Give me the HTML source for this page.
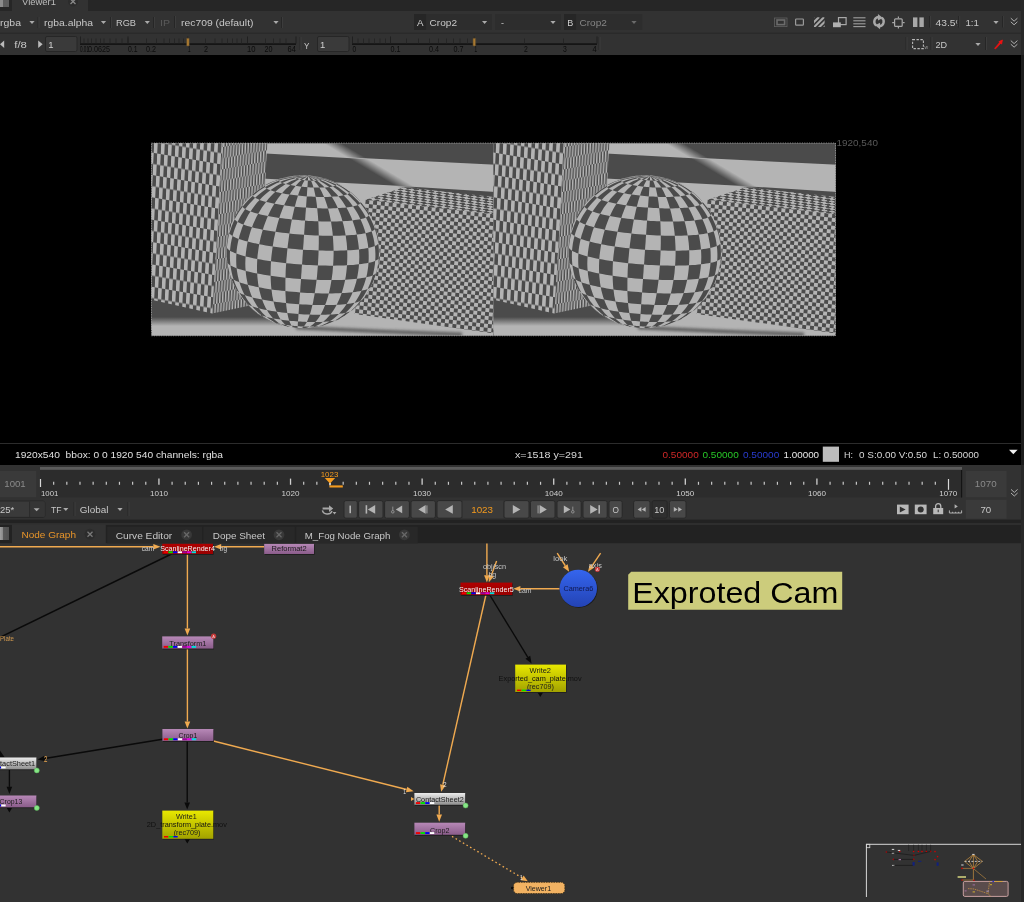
<!DOCTYPE html>
<html><head><meta charset="utf-8">
<style>
html,body{margin:0;padding:0;background:#323232;}
body{width:1024px;height:902px;overflow:hidden;position:relative;}
svg{position:absolute;left:0;top:0;display:block;}
text{font-family:"Liberation Sans",sans-serif;white-space:pre;}
</style></head><body>
<svg width="1024" height="902" viewBox="0 0 1024 902" style="opacity:0.999">
<rect x="0.00" y="0.00" width="1024.00" height="902.00" fill="#323232" />
<rect x="0.00" y="0.00" width="1024.00" height="11.00" fill="#262626" />
<rect x="12.00" y="0.00" width="76.00" height="11.00" fill="#323232" />
<rect x="0.00" y="0.00" width="3.00" height="7.00" fill="#8c8c8c" />
<rect x="3.00" y="0.00" width="6.00" height="7.00" fill="#5e5e5e" />
<text x="22.00" y="5.00" font-size="9.5" fill="#bdbdbd" text-anchor="start" textLength="34.00" lengthAdjust="spacingAndGlyphs" >Viewer1</text>
<circle cx="73" cy="1.5" r="5" fill="#2c2c2c"/>
<line x1="70.50" y1="-1.00" x2="75.50" y2="4.00" stroke="#8a8a8a" stroke-width="1.3" />
<line x1="75.50" y1="-1.00" x2="70.50" y2="4.00" stroke="#8a8a8a" stroke-width="1.3" />
<rect x="0.00" y="32.60" width="1021.00" height="1.20" fill="#2a2a2a" />
<text x="0.00" y="26.00" font-size="9.5" fill="#c8c8c8" text-anchor="start" textLength="21.00" lengthAdjust="spacingAndGlyphs" >rgba</text>
<polygon points="29.40,21.00 34.60,21.00 32.00,23.90" fill="#aaaaaa" />
<line x1="38.00" y1="17.00" x2="38.00" y2="28.00" stroke="#262626" stroke-width="1" />
<line x1="39.00" y1="17.00" x2="39.00" y2="28.00" stroke="#3c3c3c" stroke-width="1" />
<text x="44.00" y="26.00" font-size="9.5" fill="#c8c8c8" text-anchor="start" textLength="49.00" lengthAdjust="spacingAndGlyphs" >rgba.alpha</text>
<polygon points="100.90,21.00 106.10,21.00 103.50,23.90" fill="#aaaaaa" />
<line x1="110.50" y1="17.00" x2="110.50" y2="28.00" stroke="#262626" stroke-width="1" />
<line x1="111.50" y1="17.00" x2="111.50" y2="28.00" stroke="#3c3c3c" stroke-width="1" />
<text x="116.00" y="26.00" font-size="9.5" fill="#c8c8c8" text-anchor="start" textLength="20.00" lengthAdjust="spacingAndGlyphs" >RGB</text>
<polygon points="144.70,21.00 149.90,21.00 147.30,23.90" fill="#aaaaaa" />
<line x1="153.50" y1="17.00" x2="153.50" y2="28.00" stroke="#262626" stroke-width="1" />
<line x1="154.50" y1="17.00" x2="154.50" y2="28.00" stroke="#3c3c3c" stroke-width="1" />
<text x="160.00" y="26.00" font-size="9.5" fill="#5a5a5a" text-anchor="start" textLength="10.00" lengthAdjust="spacingAndGlyphs" >IP</text>
<line x1="174.50" y1="16.00" x2="174.50" y2="28.00" stroke="#262626" stroke-width="1" />
<line x1="175.50" y1="16.00" x2="175.50" y2="28.00" stroke="#3c3c3c" stroke-width="1" />
<text x="181.00" y="26.00" font-size="9.5" fill="#c8c8c8" text-anchor="start" textLength="72.50" lengthAdjust="spacingAndGlyphs" >rec709 (default)</text>
<polygon points="273.40,21.00 278.60,21.00 276.00,23.90" fill="#aaaaaa" />
<line x1="281.50" y1="17.00" x2="281.50" y2="28.00" stroke="#262626" stroke-width="1" />
<line x1="282.50" y1="17.00" x2="282.50" y2="28.00" stroke="#3c3c3c" stroke-width="1" />
<rect x="414.00" y="14.00" width="12.50" height="16.00" fill="#262626" />
<text x="417.00" y="26.00" font-size="9.5" fill="#d0d0d0" text-anchor="start" textLength="6.50" lengthAdjust="spacingAndGlyphs" >A</text>
<rect x="426.50" y="14.00" width="65.50" height="16.00" fill="#2d2d2d" />
<text x="429.60" y="26.00" font-size="9.5" fill="#c8c8c8" text-anchor="start" textLength="27.40" lengthAdjust="spacingAndGlyphs" >Crop2</text>
<polygon points="482.00,21.00 487.20,21.00 484.60,23.90" fill="#aaaaaa" />
<rect x="495.00" y="14.00" width="66.00" height="16.00" fill="#2d2d2d" />
<text x="501.00" y="26.00" font-size="9.5" fill="#c8c8c8" text-anchor="start" textLength="3.00" lengthAdjust="spacingAndGlyphs" >-</text>
<polygon points="550.40,21.00 555.60,21.00 553.00,23.90" fill="#aaaaaa" />
<rect x="564.00" y="14.00" width="12.40" height="16.00" fill="#262626" />
<text x="567.30" y="26.00" font-size="9.5" fill="#d0d0d0" text-anchor="start" textLength="6.00" lengthAdjust="spacingAndGlyphs" >B</text>
<rect x="576.40" y="14.00" width="66.00" height="16.00" fill="#2d2d2d" />
<text x="579.50" y="26.00" font-size="9.5" fill="#858585" text-anchor="start" textLength="27.40" lengthAdjust="spacingAndGlyphs" >Crop2</text>
<polygon points="631.40,21.00 636.60,21.00 634.00,23.90" fill="#6a6a6a" />
<rect x="774.5" y="18" width="12.5" height="8.6" fill="none" stroke="#606060" stroke-width="0.8"/>
<rect x="777" y="20" width="7.6" height="4.6" fill="none" stroke="#6c6c6c" stroke-width="1.6"/>
<rect x="795.6" y="19" width="7.8" height="6.2" rx="0.8" fill="none" stroke="#9a9a9a" stroke-width="1.2"/>
<g clip-path="url(#cs3)"><clipPath id="cs3"><rect x="814" y="17.2" width="10.6" height="9.8"/></clipPath>
<line x1="797.6" y1="28" x2="808.6" y2="17" stroke="#a8a8a8" stroke-width="2.1"/>
<line x1="802.8" y1="28" x2="813.8" y2="17" stroke="#a8a8a8" stroke-width="2.1"/>
<line x1="808.0" y1="28" x2="819.0" y2="17" stroke="#a8a8a8" stroke-width="2.1"/>
<line x1="813.2" y1="28" x2="824.2" y2="17" stroke="#a8a8a8" stroke-width="2.1"/>
<line x1="818.4" y1="28" x2="829.4" y2="17" stroke="#a8a8a8" stroke-width="2.1"/>
<line x1="823.6" y1="28" x2="834.6" y2="17" stroke="#a8a8a8" stroke-width="2.1"/>
<line x1="828.8" y1="28" x2="839.8" y2="17" stroke="#a8a8a8" stroke-width="2.1"/>
</g>
<rect x="838.5" y="17.6" width="7.6" height="7" fill="none" stroke="#a8a8a8" stroke-width="1.2"/>
<rect x="833.00" y="22.40" width="7.80" height="4.80" fill="#b0b0b0" />
<line x1="853.30" y1="17.80" x2="865.50" y2="17.80" stroke="#a0a0a0" stroke-width="1.1" />
<line x1="853.30" y1="20.80" x2="865.50" y2="20.80" stroke="#a0a0a0" stroke-width="1.1" />
<line x1="853.30" y1="23.80" x2="865.50" y2="23.80" stroke="#a0a0a0" stroke-width="1.1" />
<line x1="853.30" y1="26.60" x2="865.50" y2="26.60" stroke="#a0a0a0" stroke-width="1.1" />
<path d="M876.30,25.45 A4.7,4.7 0 0 1 878.35,16.95" fill="none" stroke="#a8a8a8" stroke-width="2.4"/>
<path d="M881.70,17.75 A4.7,4.7 0 0 1 879.65,26.25" fill="none" stroke="#a8a8a8" stroke-width="2.4"/>
<polygon points="877.95,13.95 882.95,17.95 877.95,20.55" fill="#a8a8a8" />
<polygon points="880.05,29.25 875.05,25.25 880.05,22.65" fill="#a8a8a8" />
<rect x="894.6" y="18.8" width="7.6" height="7.6" rx="1" fill="none" stroke="#a8a8a8" stroke-width="1.2"/>
<line x1="892.20" y1="22.60" x2="894.00" y2="22.60" stroke="#a8a8a8" stroke-width="1.2" />
<line x1="902.80" y1="22.60" x2="904.60" y2="22.60" stroke="#a8a8a8" stroke-width="1.2" />
<line x1="898.40" y1="16.40" x2="898.40" y2="18.20" stroke="#a8a8a8" stroke-width="1.2" />
<line x1="898.40" y1="27.00" x2="898.40" y2="28.60" stroke="#a8a8a8" stroke-width="1.2" />
<rect x="913.00" y="17.40" width="4.40" height="9.60" fill="#a8a8a8" />
<rect x="919.40" y="17.40" width="4.40" height="9.60" fill="#a8a8a8" />
<line x1="929.50" y1="16.00" x2="929.50" y2="27.50" stroke="#262626" stroke-width="1" />
<line x1="930.50" y1="16.00" x2="930.50" y2="27.50" stroke="#3c3c3c" stroke-width="1" />
<clipPath id="cz"><rect x="930" y="12" width="27.3" height="20"/></clipPath>
<text x="935.60" y="26.00" font-size="9.5" fill="#c8c8c8" text-anchor="start" textLength="29.00" lengthAdjust="spacingAndGlyphs" clip-path="url(#cz)">43.5%</text>
<line x1="958.70" y1="16.00" x2="958.70" y2="27.50" stroke="#262626" stroke-width="1" />
<line x1="959.70" y1="16.00" x2="959.70" y2="27.50" stroke="#3c3c3c" stroke-width="1" />
<text x="965.40" y="26.00" font-size="9.5" fill="#c8c8c8" text-anchor="start" textLength="13.60" lengthAdjust="spacingAndGlyphs" >1:1</text>
<polygon points="993.40,21.00 998.60,21.00 996.00,23.90" fill="#aaaaaa" />
<line x1="1002.60" y1="16.00" x2="1002.60" y2="27.50" stroke="#262626" stroke-width="1" />
<line x1="1003.60" y1="16.00" x2="1003.60" y2="27.50" stroke="#3c3c3c" stroke-width="1" />
<path d="M1010.8,18.2 l3.3,3 l3.3,-3 M1010.8,21.8 l3.3,3 l3.3,-3" fill="none" stroke="#b0b0b0" stroke-width="1"/>
<polygon points="0.00,44.30 4.20,40.60 4.20,48.00" fill="#bbbbbb" />
<text x="14.30" y="48.00" font-size="9.5" fill="#c8c8c8" text-anchor="start" textLength="12.60" lengthAdjust="spacingAndGlyphs" >f/8</text>
<polygon points="38.20,40.60 42.60,44.30 38.20,48.00" fill="#bbbbbb" />
<rect x="45.5" y="36.5" width="31.5" height="15" rx="1.5" fill="#3a3a3a" stroke="#262626" stroke-width="1"/>
<text x="48.30" y="48.00" font-size="9.5" fill="#d0d0d0" text-anchor="start" >1</text>
<line x1="80.00" y1="44.20" x2="296.00" y2="44.20" stroke="#151515" stroke-width="1.7" />
<line x1="80.50" y1="36.50" x2="80.50" y2="43.60" stroke="#1e1e1e" stroke-width="0.9" />
<line x1="128.00" y1="36.50" x2="128.00" y2="43.60" stroke="#1e1e1e" stroke-width="0.9" />
<line x1="187.80" y1="36.50" x2="187.80" y2="43.60" stroke="#1e1e1e" stroke-width="0.9" />
<line x1="247.50" y1="36.50" x2="247.50" y2="43.60" stroke="#1e1e1e" stroke-width="0.9" />
<line x1="296.00" y1="36.50" x2="296.00" y2="43.60" stroke="#1e1e1e" stroke-width="0.9" />
<line x1="84.00" y1="38.60" x2="84.00" y2="43.60" stroke="#222222" stroke-width="0.8" />
<line x1="88.00" y1="38.60" x2="88.00" y2="43.60" stroke="#222222" stroke-width="0.8" />
<line x1="91.50" y1="38.60" x2="91.50" y2="43.60" stroke="#222222" stroke-width="0.8" />
<line x1="96.00" y1="38.60" x2="96.00" y2="43.60" stroke="#222222" stroke-width="0.8" />
<line x1="100.50" y1="38.60" x2="100.50" y2="43.60" stroke="#222222" stroke-width="0.8" />
<line x1="104.00" y1="38.60" x2="104.00" y2="43.60" stroke="#222222" stroke-width="0.8" />
<line x1="110.00" y1="38.60" x2="110.00" y2="43.60" stroke="#222222" stroke-width="0.8" />
<line x1="116.00" y1="38.60" x2="116.00" y2="43.60" stroke="#222222" stroke-width="0.8" />
<line x1="122.00" y1="38.60" x2="122.00" y2="43.60" stroke="#222222" stroke-width="0.8" />
<line x1="128.00" y1="38.60" x2="128.00" y2="43.60" stroke="#222222" stroke-width="0.8" />
<line x1="146.50" y1="38.60" x2="146.50" y2="43.60" stroke="#222222" stroke-width="0.8" />
<line x1="156.50" y1="38.60" x2="156.50" y2="43.60" stroke="#222222" stroke-width="0.8" />
<line x1="164.00" y1="38.60" x2="164.00" y2="43.60" stroke="#222222" stroke-width="0.8" />
<line x1="169.50" y1="38.60" x2="169.50" y2="43.60" stroke="#222222" stroke-width="0.8" />
<line x1="174.50" y1="38.60" x2="174.50" y2="43.60" stroke="#222222" stroke-width="0.8" />
<line x1="179.00" y1="38.60" x2="179.00" y2="43.60" stroke="#222222" stroke-width="0.8" />
<line x1="183.50" y1="38.60" x2="183.50" y2="43.60" stroke="#222222" stroke-width="0.8" />
<line x1="205.50" y1="38.60" x2="205.50" y2="43.60" stroke="#222222" stroke-width="0.8" />
<line x1="215.00" y1="38.60" x2="215.00" y2="43.60" stroke="#222222" stroke-width="0.8" />
<line x1="222.00" y1="38.60" x2="222.00" y2="43.60" stroke="#222222" stroke-width="0.8" />
<line x1="227.50" y1="38.60" x2="227.50" y2="43.60" stroke="#222222" stroke-width="0.8" />
<line x1="232.50" y1="38.60" x2="232.50" y2="43.60" stroke="#222222" stroke-width="0.8" />
<line x1="237.00" y1="38.60" x2="237.00" y2="43.60" stroke="#222222" stroke-width="0.8" />
<line x1="241.50" y1="38.60" x2="241.50" y2="43.60" stroke="#222222" stroke-width="0.8" />
<line x1="265.50" y1="38.60" x2="265.50" y2="43.60" stroke="#222222" stroke-width="0.8" />
<line x1="273.50" y1="38.60" x2="273.50" y2="43.60" stroke="#222222" stroke-width="0.8" />
<line x1="280.00" y1="38.60" x2="280.00" y2="43.60" stroke="#222222" stroke-width="0.8" />
<line x1="286.00" y1="38.60" x2="286.00" y2="43.60" stroke="#222222" stroke-width="0.8" />
<text x="80.00" y="52.20" font-size="8.4" fill="#0c0c0c" text-anchor="start" textLength="9.00" lengthAdjust="spacingAndGlyphs" >0.01</text>
<text x="88.00" y="52.20" font-size="8.4" fill="#0c0c0c" text-anchor="start" textLength="22.00" lengthAdjust="spacingAndGlyphs" >0.0625</text>
<text x="128.00" y="52.20" font-size="8.4" fill="#0c0c0c" text-anchor="start" textLength="9.50" lengthAdjust="spacingAndGlyphs" >0.1</text>
<text x="146.00" y="52.20" font-size="8.4" fill="#0c0c0c" text-anchor="start" textLength="10.00" lengthAdjust="spacingAndGlyphs" >0.2</text>
<text x="188.00" y="52.20" font-size="8.4" fill="#0c0c0c" text-anchor="start" textLength="2.60" lengthAdjust="spacingAndGlyphs" >1</text>
<text x="204.00" y="52.20" font-size="8.4" fill="#0c0c0c" text-anchor="start" textLength="4.00" lengthAdjust="spacingAndGlyphs" >2</text>
<text x="247.00" y="52.20" font-size="8.4" fill="#0c0c0c" text-anchor="start" textLength="8.50" lengthAdjust="spacingAndGlyphs" >10</text>
<text x="264.50" y="52.20" font-size="8.4" fill="#0c0c0c" text-anchor="start" textLength="8.00" lengthAdjust="spacingAndGlyphs" >20</text>
<text x="287.60" y="52.20" font-size="8.4" fill="#0c0c0c" text-anchor="start" textLength="8.40" lengthAdjust="spacingAndGlyphs" >64</text>
<rect x="186.70" y="38.30" width="2.40" height="7.60" fill="#a87830" />
<rect x="186.4" y="38" width="3" height="8.2" rx="1" fill="none" stroke="#5a4a30" stroke-width="0.5"/>
<line x1="300.00" y1="37.00" x2="300.00" y2="50.00" stroke="#262626" stroke-width="1" />
<line x1="301.00" y1="37.00" x2="301.00" y2="50.00" stroke="#3c3c3c" stroke-width="1" />
<text x="304.00" y="49.00" font-size="9.5" fill="#c8c8c8" text-anchor="start" textLength="5.40" lengthAdjust="spacingAndGlyphs" >Y</text>
<rect x="317.5" y="36.5" width="31.5" height="15" rx="1.5" fill="#3a3a3a" stroke="#262626" stroke-width="1"/>
<text x="320.00" y="48.00" font-size="9.5" fill="#d0d0d0" text-anchor="start" >1</text>
<line x1="352.00" y1="44.20" x2="597.00" y2="44.20" stroke="#151515" stroke-width="1.7" />
<line x1="352.50" y1="36.50" x2="352.50" y2="43.60" stroke="#1e1e1e" stroke-width="0.9" />
<line x1="390.50" y1="36.50" x2="390.50" y2="43.60" stroke="#1e1e1e" stroke-width="0.9" />
<line x1="474.20" y1="36.50" x2="474.20" y2="43.60" stroke="#1e1e1e" stroke-width="0.9" />
<line x1="597.00" y1="36.50" x2="597.00" y2="43.60" stroke="#1e1e1e" stroke-width="0.9" />
<line x1="358.00" y1="38.60" x2="358.00" y2="43.60" stroke="#222222" stroke-width="0.8" />
<line x1="363.50" y1="38.60" x2="363.50" y2="43.60" stroke="#222222" stroke-width="0.8" />
<line x1="369.00" y1="38.60" x2="369.00" y2="43.60" stroke="#222222" stroke-width="0.8" />
<line x1="374.50" y1="38.60" x2="374.50" y2="43.60" stroke="#222222" stroke-width="0.8" />
<line x1="380.00" y1="38.60" x2="380.00" y2="43.60" stroke="#222222" stroke-width="0.8" />
<line x1="385.50" y1="38.60" x2="385.50" y2="43.60" stroke="#222222" stroke-width="0.8" />
<line x1="406.50" y1="38.60" x2="406.50" y2="43.60" stroke="#222222" stroke-width="0.8" />
<line x1="418.50" y1="38.60" x2="418.50" y2="43.60" stroke="#222222" stroke-width="0.8" />
<line x1="429.50" y1="38.60" x2="429.50" y2="43.60" stroke="#222222" stroke-width="0.8" />
<line x1="438.50" y1="38.60" x2="438.50" y2="43.60" stroke="#222222" stroke-width="0.8" />
<line x1="446.50" y1="38.60" x2="446.50" y2="43.60" stroke="#222222" stroke-width="0.8" />
<line x1="453.50" y1="38.60" x2="453.50" y2="43.60" stroke="#222222" stroke-width="0.8" />
<line x1="460.00" y1="38.60" x2="460.00" y2="43.60" stroke="#222222" stroke-width="0.8" />
<line x1="467.50" y1="38.60" x2="467.50" y2="43.60" stroke="#222222" stroke-width="0.8" />
<line x1="524.50" y1="38.60" x2="524.50" y2="43.60" stroke="#222222" stroke-width="0.8" />
<line x1="563.50" y1="38.60" x2="563.50" y2="43.60" stroke="#222222" stroke-width="0.8" />
<text x="352.50" y="52.20" font-size="8.4" fill="#0c0c0c" text-anchor="start" textLength="3.60" lengthAdjust="spacingAndGlyphs" >0</text>
<text x="390.50" y="52.20" font-size="8.4" fill="#0c0c0c" text-anchor="start" textLength="10.00" lengthAdjust="spacingAndGlyphs" >0.1</text>
<text x="429.00" y="52.20" font-size="8.4" fill="#0c0c0c" text-anchor="start" textLength="10.00" lengthAdjust="spacingAndGlyphs" >0.4</text>
<text x="453.50" y="52.20" font-size="8.4" fill="#0c0c0c" text-anchor="start" textLength="10.00" lengthAdjust="spacingAndGlyphs" >0.7</text>
<text x="474.60" y="52.20" font-size="8.4" fill="#0c0c0c" text-anchor="start" textLength="2.60" lengthAdjust="spacingAndGlyphs" >1</text>
<text x="524.00" y="52.20" font-size="8.4" fill="#0c0c0c" text-anchor="start" textLength="3.80" lengthAdjust="spacingAndGlyphs" >2</text>
<text x="563.00" y="52.20" font-size="8.4" fill="#0c0c0c" text-anchor="start" textLength="3.80" lengthAdjust="spacingAndGlyphs" >3</text>
<text x="592.40" y="52.20" font-size="8.4" fill="#0c0c0c" text-anchor="start" textLength="4.20" lengthAdjust="spacingAndGlyphs" >4</text>
<rect x="473.10" y="38.30" width="2.40" height="7.60" fill="#a87830" />
<rect x="472.8" y="38" width="3" height="8.2" rx="1" fill="none" stroke="#5a4a30" stroke-width="0.5"/>
<line x1="599.00" y1="37.00" x2="599.00" y2="50.00" stroke="#262626" stroke-width="1" />
<line x1="600.00" y1="37.00" x2="600.00" y2="50.00" stroke="#3c3c3c" stroke-width="1" />
<line x1="906.00" y1="37.00" x2="906.00" y2="50.00" stroke="#262626" stroke-width="1" />
<line x1="907.00" y1="37.00" x2="907.00" y2="50.00" stroke="#3c3c3c" stroke-width="1" />
<rect x="912.6" y="39.6" width="10.8" height="9" fill="none" stroke="#b8b8b8" stroke-width="1.1" stroke-dasharray="2.4,1.5"/>
<text x="924.60" y="49.40" font-size="4.5" fill="#9a9a9a" text-anchor="start" textLength="3.60" lengthAdjust="spacingAndGlyphs" >w</text>
<line x1="931.00" y1="37.00" x2="931.00" y2="50.00" stroke="#262626" stroke-width="1" />
<line x1="932.00" y1="37.00" x2="932.00" y2="50.00" stroke="#3c3c3c" stroke-width="1" />
<text x="935.40" y="48.00" font-size="9.5" fill="#c8c8c8" text-anchor="start" textLength="11.60" lengthAdjust="spacingAndGlyphs" >2D</text>
<polygon points="975.40,43.00 980.60,43.00 978.00,45.90" fill="#aaaaaa" />
<line x1="985.50" y1="37.00" x2="985.50" y2="50.00" stroke="#262626" stroke-width="1" />
<line x1="986.50" y1="37.00" x2="986.50" y2="50.00" stroke="#3c3c3c" stroke-width="1" />
<path d="M994.6,48.4 L999.6,42.6 L998.8,41.8 L1002.4,40 L1001.6,44 L1000.6,43.4 L995.6,48.8 Z" fill="#ee1111" stroke="#ee1111" stroke-width="0.8"/>
<path d="M1010.8,40.6 l3.3,3 l3.3,-3 M1010.8,44.2 l3.3,3 l3.3,-3" fill="none" stroke="#b0b0b0" stroke-width="1"/>
<rect x="0.00" y="55.00" width="1021.00" height="410.00" fill="#000000" />
<rect x="0.00" y="443.00" width="1021.00" height="1.00" fill="#2c2c2c" />
<rect x="1021.00" y="0.00" width="3.00" height="902.00" fill="#282828" />
<rect x="1021.00" y="55.00" width="3.00" height="410.00" fill="#1c1c1c" />
<text x="15.00" y="458.00" font-size="9.5" fill="#e0e0e0" text-anchor="start" textLength="208.00" lengthAdjust="spacingAndGlyphs" >1920x540  bbox: 0 0 1920 540 channels: rgba</text>
<text x="515.00" y="458.00" font-size="9.5" fill="#d8d8d8" text-anchor="start" textLength="68.00" lengthAdjust="spacingAndGlyphs" >x=1518 y=291</text>
<text x="662.50" y="458.00" font-size="9.5" fill="#d02828" text-anchor="start" textLength="36.20" lengthAdjust="spacingAndGlyphs" >0.50000</text>
<text x="702.50" y="458.00" font-size="9.5" fill="#28c828" text-anchor="start" textLength="36.20" lengthAdjust="spacingAndGlyphs" >0.50000</text>
<text x="743.00" y="458.00" font-size="9.5" fill="#2a3cd0" text-anchor="start" textLength="36.20" lengthAdjust="spacingAndGlyphs" >0.50000</text>
<text x="783.50" y="458.00" font-size="9.5" fill="#e8e8e8" text-anchor="start" textLength="35.60" lengthAdjust="spacingAndGlyphs" >1.00000</text>
<rect x="822.80" y="446.60" width="16.20" height="15.20" fill="#bcbcbc" />
<text x="844.00" y="458.00" font-size="9.5" fill="#d8d8d8" text-anchor="start" textLength="9.00" lengthAdjust="spacingAndGlyphs" >H:</text>
<text x="859.00" y="458.00" font-size="9.5" fill="#d8d8d8" text-anchor="start" textLength="68.00" lengthAdjust="spacingAndGlyphs" >0 S:0.00 V:0.50</text>
<text x="933.00" y="458.00" font-size="9.5" fill="#d8d8d8" text-anchor="start" textLength="46.00" lengthAdjust="spacingAndGlyphs" >L: 0.50000</text>
<polygon points="1009.00,449.80 1017.60,449.80 1013.30,454.20" fill="#f0f0f0" />
<rect x="0.00" y="465.00" width="1021.00" height="58.00" fill="#323232" />
<rect x="40.00" y="467.00" width="922.00" height="30.50" fill="#2c2c2c" />
<rect x="40.00" y="467.00" width="922.00" height="2.80" fill="#5c5c5c" />
<rect x="961.00" y="470.00" width="1.20" height="27.50" fill="#141414" />
<rect x="0.00" y="471.00" width="36.20" height="26.20" fill="#3a3a3a" />
<text x="4.30" y="487.40" font-size="9.5" fill="#8a8a8a" text-anchor="start" textLength="21.40" lengthAdjust="spacingAndGlyphs" >1001</text>
<rect x="965.80" y="471.00" width="40.80" height="26.20" fill="#3a3a3a" />
<text x="974.80" y="487.40" font-size="9.5" fill="#8a8a8a" text-anchor="start" textLength="21.80" lengthAdjust="spacingAndGlyphs" >1070</text>
<path d="M1011,489.4 l3.3,3 l3.3,-3 M1011,493.0 l3.3,3 l3.3,-3" fill="none" stroke="#b0b0b0" stroke-width="1"/>
<line x1="40.50" y1="479.00" x2="40.50" y2="487.00" stroke="#d8d8d8" stroke-width="1.2" />
<line x1="53.66" y1="481.80" x2="53.66" y2="484.80" stroke="#c8c8c8" stroke-width="1.2" />
<line x1="66.82" y1="481.80" x2="66.82" y2="484.80" stroke="#c8c8c8" stroke-width="1.2" />
<line x1="79.98" y1="481.80" x2="79.98" y2="484.80" stroke="#c8c8c8" stroke-width="1.2" />
<line x1="93.14" y1="481.80" x2="93.14" y2="484.80" stroke="#c8c8c8" stroke-width="1.2" />
<line x1="106.30" y1="481.80" x2="106.30" y2="484.80" stroke="#c8c8c8" stroke-width="1.2" />
<line x1="119.46" y1="481.80" x2="119.46" y2="484.80" stroke="#c8c8c8" stroke-width="1.2" />
<line x1="132.62" y1="481.80" x2="132.62" y2="484.80" stroke="#c8c8c8" stroke-width="1.2" />
<line x1="145.78" y1="481.80" x2="145.78" y2="484.80" stroke="#c8c8c8" stroke-width="1.2" />
<line x1="158.93" y1="478.60" x2="158.93" y2="484.80" stroke="#d0d0d0" stroke-width="1.3" />
<line x1="172.09" y1="481.80" x2="172.09" y2="484.80" stroke="#c8c8c8" stroke-width="1.2" />
<line x1="185.25" y1="481.80" x2="185.25" y2="484.80" stroke="#c8c8c8" stroke-width="1.2" />
<line x1="198.41" y1="481.80" x2="198.41" y2="484.80" stroke="#c8c8c8" stroke-width="1.2" />
<line x1="211.57" y1="481.80" x2="211.57" y2="484.80" stroke="#c8c8c8" stroke-width="1.2" />
<line x1="224.73" y1="481.80" x2="224.73" y2="484.80" stroke="#c8c8c8" stroke-width="1.2" />
<line x1="237.89" y1="481.80" x2="237.89" y2="484.80" stroke="#c8c8c8" stroke-width="1.2" />
<line x1="251.05" y1="481.80" x2="251.05" y2="484.80" stroke="#c8c8c8" stroke-width="1.2" />
<line x1="264.21" y1="481.80" x2="264.21" y2="484.80" stroke="#c8c8c8" stroke-width="1.2" />
<line x1="277.37" y1="481.80" x2="277.37" y2="484.80" stroke="#c8c8c8" stroke-width="1.2" />
<line x1="290.53" y1="478.60" x2="290.53" y2="484.80" stroke="#d0d0d0" stroke-width="1.3" />
<line x1="303.69" y1="481.80" x2="303.69" y2="484.80" stroke="#c8c8c8" stroke-width="1.2" />
<line x1="316.85" y1="481.80" x2="316.85" y2="484.80" stroke="#c8c8c8" stroke-width="1.2" />
<line x1="330.01" y1="481.80" x2="330.01" y2="484.80" stroke="#c8c8c8" stroke-width="1.2" />
<line x1="343.17" y1="481.80" x2="343.17" y2="484.80" stroke="#c8c8c8" stroke-width="1.2" />
<line x1="356.33" y1="481.80" x2="356.33" y2="484.80" stroke="#c8c8c8" stroke-width="1.2" />
<line x1="369.49" y1="481.80" x2="369.49" y2="484.80" stroke="#c8c8c8" stroke-width="1.2" />
<line x1="382.64" y1="481.80" x2="382.64" y2="484.80" stroke="#c8c8c8" stroke-width="1.2" />
<line x1="395.80" y1="481.80" x2="395.80" y2="484.80" stroke="#c8c8c8" stroke-width="1.2" />
<line x1="408.96" y1="481.80" x2="408.96" y2="484.80" stroke="#c8c8c8" stroke-width="1.2" />
<line x1="422.12" y1="478.60" x2="422.12" y2="484.80" stroke="#d0d0d0" stroke-width="1.3" />
<line x1="435.28" y1="481.80" x2="435.28" y2="484.80" stroke="#c8c8c8" stroke-width="1.2" />
<line x1="448.44" y1="481.80" x2="448.44" y2="484.80" stroke="#c8c8c8" stroke-width="1.2" />
<line x1="461.60" y1="481.80" x2="461.60" y2="484.80" stroke="#c8c8c8" stroke-width="1.2" />
<line x1="474.76" y1="481.80" x2="474.76" y2="484.80" stroke="#c8c8c8" stroke-width="1.2" />
<line x1="487.92" y1="481.80" x2="487.92" y2="484.80" stroke="#c8c8c8" stroke-width="1.2" />
<line x1="501.08" y1="481.80" x2="501.08" y2="484.80" stroke="#c8c8c8" stroke-width="1.2" />
<line x1="514.24" y1="481.80" x2="514.24" y2="484.80" stroke="#c8c8c8" stroke-width="1.2" />
<line x1="527.40" y1="481.80" x2="527.40" y2="484.80" stroke="#c8c8c8" stroke-width="1.2" />
<line x1="540.56" y1="481.80" x2="540.56" y2="484.80" stroke="#c8c8c8" stroke-width="1.2" />
<line x1="553.72" y1="478.60" x2="553.72" y2="484.80" stroke="#d0d0d0" stroke-width="1.3" />
<line x1="566.88" y1="481.80" x2="566.88" y2="484.80" stroke="#c8c8c8" stroke-width="1.2" />
<line x1="580.04" y1="481.80" x2="580.04" y2="484.80" stroke="#c8c8c8" stroke-width="1.2" />
<line x1="593.20" y1="481.80" x2="593.20" y2="484.80" stroke="#c8c8c8" stroke-width="1.2" />
<line x1="606.36" y1="481.80" x2="606.36" y2="484.80" stroke="#c8c8c8" stroke-width="1.2" />
<line x1="619.51" y1="481.80" x2="619.51" y2="484.80" stroke="#c8c8c8" stroke-width="1.2" />
<line x1="632.67" y1="481.80" x2="632.67" y2="484.80" stroke="#c8c8c8" stroke-width="1.2" />
<line x1="645.83" y1="481.80" x2="645.83" y2="484.80" stroke="#c8c8c8" stroke-width="1.2" />
<line x1="658.99" y1="481.80" x2="658.99" y2="484.80" stroke="#c8c8c8" stroke-width="1.2" />
<line x1="672.15" y1="481.80" x2="672.15" y2="484.80" stroke="#c8c8c8" stroke-width="1.2" />
<line x1="685.31" y1="478.60" x2="685.31" y2="484.80" stroke="#d0d0d0" stroke-width="1.3" />
<line x1="698.47" y1="481.80" x2="698.47" y2="484.80" stroke="#c8c8c8" stroke-width="1.2" />
<line x1="711.63" y1="481.80" x2="711.63" y2="484.80" stroke="#c8c8c8" stroke-width="1.2" />
<line x1="724.79" y1="481.80" x2="724.79" y2="484.80" stroke="#c8c8c8" stroke-width="1.2" />
<line x1="737.95" y1="481.80" x2="737.95" y2="484.80" stroke="#c8c8c8" stroke-width="1.2" />
<line x1="751.11" y1="481.80" x2="751.11" y2="484.80" stroke="#c8c8c8" stroke-width="1.2" />
<line x1="764.27" y1="481.80" x2="764.27" y2="484.80" stroke="#c8c8c8" stroke-width="1.2" />
<line x1="777.43" y1="481.80" x2="777.43" y2="484.80" stroke="#c8c8c8" stroke-width="1.2" />
<line x1="790.59" y1="481.80" x2="790.59" y2="484.80" stroke="#c8c8c8" stroke-width="1.2" />
<line x1="803.75" y1="481.80" x2="803.75" y2="484.80" stroke="#c8c8c8" stroke-width="1.2" />
<line x1="816.91" y1="478.60" x2="816.91" y2="484.80" stroke="#d0d0d0" stroke-width="1.3" />
<line x1="830.07" y1="481.80" x2="830.07" y2="484.80" stroke="#c8c8c8" stroke-width="1.2" />
<line x1="843.22" y1="481.80" x2="843.22" y2="484.80" stroke="#c8c8c8" stroke-width="1.2" />
<line x1="856.38" y1="481.80" x2="856.38" y2="484.80" stroke="#c8c8c8" stroke-width="1.2" />
<line x1="869.54" y1="481.80" x2="869.54" y2="484.80" stroke="#c8c8c8" stroke-width="1.2" />
<line x1="882.70" y1="481.80" x2="882.70" y2="484.80" stroke="#c8c8c8" stroke-width="1.2" />
<line x1="895.86" y1="481.80" x2="895.86" y2="484.80" stroke="#c8c8c8" stroke-width="1.2" />
<line x1="909.02" y1="481.80" x2="909.02" y2="484.80" stroke="#c8c8c8" stroke-width="1.2" />
<line x1="922.18" y1="481.80" x2="922.18" y2="484.80" stroke="#c8c8c8" stroke-width="1.2" />
<line x1="935.34" y1="481.80" x2="935.34" y2="484.80" stroke="#c8c8c8" stroke-width="1.2" />
<line x1="948.50" y1="479.00" x2="948.50" y2="489.80" stroke="#d8d8d8" stroke-width="1.2" />
<text x="41.00" y="496.10" font-size="8" fill="#d0d0d0" text-anchor="start" textLength="17.40" lengthAdjust="spacingAndGlyphs" >1001</text>
<text x="158.93" y="496.10" font-size="8" fill="#d0d0d0" text-anchor="middle" textLength="18.00" lengthAdjust="spacingAndGlyphs" >1010</text>
<text x="290.53" y="496.10" font-size="8" fill="#d0d0d0" text-anchor="middle" textLength="18.00" lengthAdjust="spacingAndGlyphs" >1020</text>
<text x="422.12" y="496.10" font-size="8" fill="#d0d0d0" text-anchor="middle" textLength="18.00" lengthAdjust="spacingAndGlyphs" >1030</text>
<text x="553.72" y="496.10" font-size="8" fill="#d0d0d0" text-anchor="middle" textLength="18.00" lengthAdjust="spacingAndGlyphs" >1040</text>
<text x="685.31" y="496.10" font-size="8" fill="#d0d0d0" text-anchor="middle" textLength="18.00" lengthAdjust="spacingAndGlyphs" >1050</text>
<text x="816.91" y="496.10" font-size="8" fill="#d0d0d0" text-anchor="middle" textLength="18.00" lengthAdjust="spacingAndGlyphs" >1060</text>
<text x="957.20" y="496.10" font-size="8" fill="#d0d0d0" text-anchor="end" textLength="18.00" lengthAdjust="spacingAndGlyphs" >1070</text>
<text x="329.51" y="476.50" font-size="8" fill="#f39a1e" text-anchor="middle" textLength="17.60" lengthAdjust="spacingAndGlyphs" >1023</text>
<polygon points="324.81,478.00 335.21,478.00 330.01,483.40" fill="#f39a1e" />
<line x1="330.01" y1="483.00" x2="330.01" y2="485.40" stroke="#f0f0f0" stroke-width="1.2" />
<rect x="329.41" y="485.40" width="13.40" height="2.10" fill="#f39a1e" />
<rect x="-2" y="501" width="47" height="16.4" rx="2" fill="#3a3a3a" stroke="#272727" stroke-width="1"/>
<rect x="29.60" y="501.50" width="15.00" height="15.40" fill="#353535" />
<line x1="29.60" y1="501.50" x2="29.60" y2="517.00" stroke="#2a2a2a" stroke-width="1" />
<text x="0.00" y="513.00" font-size="9.5" fill="#c8c8c8" text-anchor="start" textLength="14.20" lengthAdjust="spacingAndGlyphs" >25*</text>
<polygon points="33.60,508.20 39.60,508.20 36.60,511.20" fill="#aaaaaa" />
<text x="51.00" y="513.00" font-size="9.5" fill="#c8c8c8" text-anchor="start" textLength="10.60" lengthAdjust="spacingAndGlyphs" >TF</text>
<polygon points="63.20,508.10 68.40,508.10 65.80,511.00" fill="#aaaaaa" />
<line x1="74.00" y1="502.00" x2="74.00" y2="516.00" stroke="#262626" stroke-width="1" />
<line x1="75.00" y1="502.00" x2="75.00" y2="516.00" stroke="#3c3c3c" stroke-width="1" />
<text x="79.80" y="513.00" font-size="9.5" fill="#c8c8c8" text-anchor="start" textLength="28.60" lengthAdjust="spacingAndGlyphs" >Global</text>
<polygon points="117.40,508.10 122.60,508.10 120.00,511.00" fill="#aaaaaa" />
<line x1="128.00" y1="502.00" x2="128.00" y2="516.00" stroke="#262626" stroke-width="1" />
<line x1="129.00" y1="502.00" x2="129.00" y2="516.00" stroke="#3c3c3c" stroke-width="1" />
<path d="M322.6,507.6 h6.4 v-2.4 l4.2,3.4 l-4.2,3.4 v-2.4 h-6.4 z" fill="#a8a8a8"/>
<path d="M322.4,510.4 a5,4.6 0 0 0 9.6,0.6" fill="none" stroke="#a8a8a8" stroke-width="1.5"/>
<polygon points="332.60,512.00 336.40,512.00 334.50,514.40" fill="#a8a8a8" />
<rect x="344" y="500.6" width="13.300000000000011" height="17.6" rx="2" fill="#484848" stroke="#282828" stroke-width="1"/>
<rect x="349.40" y="505.60" width="1.60" height="7.60" fill="#b4b4b4" />
<rect x="358.6" y="500.6" width="24.399999999999977" height="17.6" rx="2" fill="#484848" stroke="#282828" stroke-width="1"/>
<rect x="365.60" y="505.20" width="1.60" height="8.40" fill="#b4b4b4" />
<polygon points="367.80,509.40 375.20,505.00 375.20,513.80" fill="#b4b4b4" />
<rect x="384.6" y="500.6" width="24.799999999999955" height="17.6" rx="2" fill="#484848" stroke="#282828" stroke-width="1"/>
<polygon points="395.80,509.40 402.20,505.60 402.20,513.20" fill="#b4b4b4" />
<circle cx="392.8" cy="511.8" r="1.3" fill="none" stroke="#a0a0a0" stroke-width="0.8"/>
<line x1="392.80" y1="506.60" x2="392.80" y2="510.40" stroke="#a0a0a0" stroke-width="0.8" />
<rect x="411" y="500.6" width="24.399999999999977" height="17.6" rx="2" fill="#484848" stroke="#282828" stroke-width="1"/>
<polygon points="418.40,509.40 425.60,505.00 425.60,513.80" fill="#b4b4b4" />
<rect x="426.20" y="505.40" width="1.40" height="8.00" fill="#8a8a8a" />
<rect x="437" y="500.6" width="25" height="17.6" rx="2" fill="#484848" stroke="#282828" stroke-width="1"/>
<polygon points="445.20,509.40 452.80,505.00 452.80,513.80" fill="#b4b4b4" />
<rect x="462.60" y="500.60" width="40.80" height="17.60" fill="#3a3a3a" />
<text x="471.20" y="513.00" font-size="9.5" fill="#f39a1e" text-anchor="start" textLength="21.80" lengthAdjust="spacingAndGlyphs" >1023</text>
<rect x="504" y="500.6" width="25" height="17.6" rx="2" fill="#484848" stroke="#282828" stroke-width="1"/>
<polygon points="520.40,509.40 512.80,505.00 512.80,513.80" fill="#b4b4b4" />
<rect x="530.4" y="500.6" width="24.600000000000023" height="17.6" rx="2" fill="#484848" stroke="#282828" stroke-width="1"/>
<rect x="537.40" y="505.40" width="1.40" height="8.00" fill="#8a8a8a" />
<polygon points="546.80,509.40 539.60,505.00 539.60,513.80" fill="#b4b4b4" />
<rect x="557" y="500.6" width="24.200000000000045" height="17.6" rx="2" fill="#484848" stroke="#282828" stroke-width="1"/>
<polygon points="570.40,509.40 563.80,505.60 563.80,513.20" fill="#b4b4b4" />
<circle cx="572.8" cy="511.8" r="1.3" fill="none" stroke="#a0a0a0" stroke-width="0.8"/>
<line x1="572.80" y1="506.60" x2="572.80" y2="510.40" stroke="#a0a0a0" stroke-width="0.8" />
<rect x="583" y="500.6" width="24.200000000000045" height="17.6" rx="2" fill="#484848" stroke="#282828" stroke-width="1"/>
<polygon points="597.60,509.40 590.20,505.00 590.20,513.80" fill="#b4b4b4" />
<rect x="598.40" y="505.20" width="1.60" height="8.40" fill="#b4b4b4" />
<rect x="609" y="500.6" width="13.200000000000045" height="17.6" rx="2" fill="#484848" stroke="#282828" stroke-width="1"/>
<text x="615.60" y="513.00" font-size="9.5" fill="#c8c8c8" text-anchor="middle" textLength="6.40" lengthAdjust="spacingAndGlyphs" >O</text>
<rect x="633.6" y="500.6" width="16.399999999999977" height="17.6" rx="2" fill="#484848" stroke="#282828" stroke-width="1"/>
<polygon points="637.60,509.40 641.40,507.00 641.40,511.80" fill="#b4b4b4" />
<polygon points="641.80,509.40 645.60,507.00 645.60,511.80" fill="#b4b4b4" />
<rect x="652" y="500.6" width="15.2" height="17.6" rx="2" fill="#2f2f2f" stroke="#262626" stroke-width="1"/>
<text x="654.20" y="513.00" font-size="9.5" fill="#c8c8c8" text-anchor="start" textLength="10.20" lengthAdjust="spacingAndGlyphs" >10</text>
<rect x="669.4" y="500.6" width="16.600000000000023" height="17.6" rx="2" fill="#484848" stroke="#282828" stroke-width="1"/>
<polygon points="677.60,509.40 673.80,507.00 673.80,511.80" fill="#b4b4b4" />
<polygon points="682.00,509.40 678.20,507.00 678.20,511.80" fill="#b4b4b4" />
<rect x="897.00" y="504.60" width="11.60" height="9.60" fill="#b8b8b8" />
<polygon points="899.80,506.40 899.80,512.40 905.60,509.40" fill="#303030" />
<rect x="914.80" y="504.60" width="11.80" height="9.60" fill="#b8b8b8" />
<circle cx="920.7" cy="509.4" r="3" fill="#303030"/>
<rect x="933.20" y="508.00" width="10.00" height="6.20" fill="#b8b8b8" />
<path d="M935.6,508 v-1.6 a2.6,2.8 0 0 1 5.2,0 v1.6" fill="none" stroke="#b8b8b8" stroke-width="1.3"/>
<rect x="937.70" y="509.60" width="1.00" height="2.60" fill="#303030" />
<path d="M949.4,510.4 v2.6 h12.2 v-2.6 M952.6,513 v-1.2 M955.6,513 v-1.2 M958.6,513 v-1.2" fill="none" stroke="#b0b0b0" stroke-width="1"/>
<polygon points="954.60,504.20 954.60,508.60 957.80,506.40" fill="#b0b0b0" />
<rect x="965.80" y="499.80" width="40.80" height="19.00" fill="#3a3a3a" />
<text x="980.40" y="513.00" font-size="9.5" fill="#c8c8c8" text-anchor="start" textLength="10.80" lengthAdjust="spacingAndGlyphs" >70</text>
<rect x="0.00" y="519.60" width="1021.00" height="3.40" fill="#222222" />
<rect x="0.00" y="523.00" width="1021.00" height="2.00" fill="#2e2e2e" />
<rect x="0.00" y="525.00" width="1021.00" height="18.50" fill="#222222" />
<rect x="0.00" y="543.50" width="1021.00" height="358.50" fill="#323232" />
<rect x="12.00" y="524.40" width="93.80" height="19.40" fill="#323232" />
<rect x="107.20" y="526.80" width="94.80" height="16.70" fill="#282828" />
<rect x="203.40" y="526.80" width="91.40" height="16.70" fill="#282828" />
<rect x="296.20" y="526.80" width="121.60" height="16.70" fill="#282828" />
<linearGradient id="tbi" x1="0" x2="1" y1="0" y2="0"><stop offset="0" stop-color="#a0a0a0"/><stop offset="0.3" stop-color="#8a8a8a"/><stop offset="0.32" stop-color="#5a5a5a"/><stop offset="1" stop-color="#505050"/></linearGradient>
<rect x="0.00" y="527.00" width="9.00" height="13.00" fill="url(#tbi)" />
<text x="21.50" y="537.60" font-size="9.5" fill="#e8952a" text-anchor="start" textLength="54.50" lengthAdjust="spacingAndGlyphs" >Node Graph</text>
<circle cx="90" cy="534.2" r="5.4" fill="#2c2c2c"/>
<line x1="87.50" y1="531.70" x2="92.50" y2="536.70" stroke="#7a7a7a" stroke-width="1.3" />
<line x1="92.50" y1="531.70" x2="87.50" y2="536.70" stroke="#7a7a7a" stroke-width="1.3" />
<text x="115.70" y="538.90" font-size="9.5" fill="#c8c8c8" text-anchor="start" textLength="56.50" lengthAdjust="spacingAndGlyphs" >Curve Editor</text>
<circle cx="186.6" cy="534.8" r="5.4" fill="#383838"/>
<line x1="184.10" y1="532.30" x2="189.10" y2="537.30" stroke="#686868" stroke-width="1.3" />
<line x1="189.10" y1="532.30" x2="184.10" y2="537.30" stroke="#686868" stroke-width="1.3" />
<text x="212.80" y="538.90" font-size="9.5" fill="#c8c8c8" text-anchor="start" textLength="52.20" lengthAdjust="spacingAndGlyphs" >Dope Sheet</text>
<circle cx="279" cy="534.8" r="5.4" fill="#383838"/>
<line x1="276.50" y1="532.30" x2="281.50" y2="537.30" stroke="#686868" stroke-width="1.3" />
<line x1="281.50" y1="532.30" x2="276.50" y2="537.30" stroke="#686868" stroke-width="1.3" />
<text x="304.80" y="538.90" font-size="9.5" fill="#c8c8c8" text-anchor="start" textLength="85.50" lengthAdjust="spacingAndGlyphs" >M_Fog Node Graph</text>
<circle cx="404.4" cy="534.8" r="5.4" fill="#383838"/>
<line x1="401.90" y1="532.30" x2="406.90" y2="537.30" stroke="#686868" stroke-width="1.3" />
<line x1="406.90" y1="532.30" x2="401.90" y2="537.30" stroke="#686868" stroke-width="1.3" />
<defs>
<clipPath id="pclip"><rect x="151.5" y="143.2" width="342.0" height="192.6"/></clipPath>
<pattern id="pLL" width="2" height="2" patternUnits="userSpaceOnUse" patternTransform="matrix(3.52 0.6 -0.5 11.1 153.7 152.9)"><rect width="2" height="2" fill="#b4b4b4"/><rect width="1" height="1" fill="#4b4b4b"/><rect x="1" y="1" width="1" height="1" fill="#4b4b4b"/></pattern>
<pattern id="pLR" width="2" height="2" patternUnits="userSpaceOnUse" patternTransform="matrix(1.45 -0.26 -0.5 11.2 223 147)"><rect width="2" height="2" fill="#b4b4b4"/><rect width="1" height="1" fill="#4b4b4b"/><rect x="1" y="1" width="1" height="1" fill="#4b4b4b"/></pattern>
<pattern id="pRF" width="2" height="2" patternUnits="userSpaceOnUse" patternTransform="matrix(3.9 0.44 -0.36 3.9 365.5 199.8)"><rect width="2" height="2" fill="#b4b4b4"/><rect width="1" height="1" fill="#4b4b4b"/><rect x="1" y="1" width="1" height="1" fill="#4b4b4b"/></pattern>
<pattern id="pRT" width="2" height="2" patternUnits="userSpaceOnUse" patternTransform="matrix(3.9 0.44 3.85 -1.22 365.5 199.8)"><rect width="2" height="2" fill="#b4b4b4"/><rect width="1" height="1" fill="#4b4b4b"/><rect x="1" y="1" width="1" height="1" fill="#4b4b4b"/></pattern>
<filter id="bl1" x="-5%" y="-20%" width="110%" height="140%"><feGaussianBlur stdDeviation="0.6"/></filter>
<filter id="bl2" x="-5%" y="-50%" width="110%" height="200%"><feGaussianBlur stdDeviation="1.4"/></filter>
<filter id="bl3" x="-30%" y="-30%" width="160%" height="160%"><feGaussianBlur stdDeviation="2.6"/></filter>
<linearGradient id="flg" x1="0" x2="0" y1="317" y2="326" gradientUnits="userSpaceOnUse"><stop offset="0" stop-color="#4b4b4b"/><stop offset="1" stop-color="#b4b4b4"/></linearGradient>
<g id="scene">
<rect x="150.50" y="142.20" width="344.00" height="194.60" fill="#b4b4b4" />
<g filter="url(#bl1)">
<polygon points="250.00,152.70 520.00,167.50 520.00,192.40 250.00,177.80" fill="#4b4b4b" />
</g>
<linearGradient id="dgr" gradientUnits="userSpaceOnUse" x1="367.55" y1="169.46" x2="372.25" y2="161.54"><stop offset="0" stop-color="#000"/><stop offset="1" stop-color="#fff"/></linearGradient>
<mask id="dmask" maskUnits="userSpaceOnUse" x="140" y="130" width="400" height="220"><rect x="140" y="130" width="400" height="220" fill="url(#dgr)"/></mask>
<g mask="url(#dmask)">
<rect x="300.00" y="130.00" width="220.00" height="90.00" fill="#b4b4b4" />
<g filter="url(#bl1)">
<polygon points="300.00,120.00 520.00,120.00 520.00,165.90 300.00,155.10" fill="#4b4b4b" />
<polygon points="300.00,179.70 520.00,193.40 520.00,230.00 300.00,230.00" fill="#4b4b4b" />
</g>
</g>
<polygon points="140.00,285.00 300.00,285.00 300.00,330.00 140.00,330.00" fill="url(#flg)" />
<path d="M296,327.6 L380,331.4 L462,334.4" fill="none" stroke="#4b4b4b" stroke-width="3.2" filter="url(#bl2)" opacity="0.9"/>
<polygon points="140.00,130.00 223.60,130.00 212.20,313.40 151.50,299.70 140.00,297.20" fill="url(#pLL)" />
<polygon points="223.60,130.00 268.00,130.00 259.00,303.60 212.20,313.40" fill="url(#pLR)" />
<polygon points="365.50,199.70 404.00,187.30 500.00,197.70 500.00,215.80" fill="url(#pRT)" />
<polygon points="365.50,199.70 500.00,214.90 500.00,334.40 354.80,313.90" fill="url(#pRF)" />
<circle cx="302.9" cy="251.8" r="76.5" fill="#b4b4b4"/>
<clipPath id="sclip"><circle cx="302.9" cy="251.8" r="76.5"/></clipPath>
<path d="M308.3,174.0 L307.5,173.9 L306.8,173.9 L306.0,173.8 L305.2,173.8 L305.9,175.4 L306.7,175.6 L307.4,176.0 L308.2,176.6 L308.2,176.6 L308.2,176.6 L308.2,176.6 L308.2,176.6 L308.2,176.0 L308.2,175.7 L308.2,175.5ZM302.1,173.8 L301.4,173.8 L300.7,173.8 L300.1,175.4 L299.4,175.4 L301.6,175.4 L303.8,175.6 L306.0,176.0 L308.2,176.6 L308.2,176.6 L308.2,176.6 L308.2,176.6 L308.2,176.6 L306.7,176.0 L305.2,175.6 L303.7,175.3ZM290.5,174.8 L289.3,175.0 L288.1,175.2 L286.9,175.4 L285.9,175.7 L288.6,175.1 L291.4,174.6 L294.4,175.8 L297.1,175.6 L297.7,175.5 L298.2,175.5 L298.8,175.4 L299.4,175.4 L297.2,174.0 L294.9,174.2 L292.7,174.4ZM297.1,175.6 L296.6,175.6 L296.1,175.7 L295.7,175.8 L295.3,175.9 L298.5,175.8 L301.7,175.8 L304.9,176.1 L308.2,176.6 L308.2,176.6 L308.2,176.6 L308.2,176.6 L308.2,176.6 L305.4,176.0 L302.6,175.7 L299.9,175.5ZM282.2,176.6 L281.5,176.8 L281.2,178.4 L280.6,178.6 L280.1,178.8 L283.5,177.9 L286.9,177.2 L290.4,176.6 L294.0,176.3 L294.2,176.1 L294.5,176.0 L294.9,176.0 L295.3,175.9 L292.1,176.1 L288.9,176.6 L285.4,175.8ZM243.8,200.9 L243.1,201.6 L242.6,202.3 L242.0,203.0 L242.8,204.5 L245.1,201.6 L247.6,198.9 L250.3,196.4 L253.0,193.9 L253.4,193.5 L253.0,191.8 L253.6,191.3 L254.3,190.7 L251.5,193.1 L248.8,195.5 L246.3,198.1ZM266.4,182.8 L265.7,183.2 L265.9,184.9 L265.5,185.2 L265.2,185.6 L268.4,183.9 L271.8,182.3 L275.2,180.9 L278.8,179.8 L279.0,179.5 L279.3,179.3 L279.6,179.1 L280.1,178.8 L276.7,179.9 L273.5,181.2 L269.6,181.2ZM294.0,176.3 L293.7,176.4 L293.5,176.5 L293.4,176.6 L293.3,176.7 L297.0,176.4 L300.7,176.3 L304.4,176.3 L308.2,176.6 L308.2,176.6 L308.2,176.6 L308.2,176.6 L308.2,176.6 L304.6,176.2 L301.0,176.0 L297.5,176.1ZM228.5,275.2 L228.6,275.7 L228.8,276.2 L229.0,276.8 L230.7,276.9 L229.6,273.4 L228.7,269.8 L227.9,266.2 L227.3,262.6 L227.1,261.9 L225.5,261.4 L225.4,260.8 L225.3,260.2 L225.8,264.0 L226.5,267.8 L227.4,271.5ZM225.2,245.0 L225.1,245.7 L226.6,246.5 L226.6,247.1 L226.9,247.8 L227.3,244.1 L227.8,240.5 L228.5,236.8 L229.4,233.2 L229.1,232.6 L229.1,231.9 L227.7,230.8 L227.9,230.1 L227.0,233.8 L226.2,237.5 L225.6,241.2ZM233.5,216.2 L234.5,217.5 L234.4,218.1 L234.5,218.7 L234.7,219.3 L236.5,216.0 L238.4,212.8 L240.4,209.7 L242.6,206.7 L242.4,206.1 L242.4,205.6 L242.5,205.0 L242.8,204.5 L239.3,206.5 L237.2,209.6 L235.3,212.9ZM253.0,193.9 L252.8,194.4 L252.7,194.8 L252.7,195.3 L252.9,195.8 L255.8,193.4 L258.8,191.1 L261.9,189.0 L265.1,187.0 L264.9,186.7 L264.9,186.3 L265.0,185.9 L265.2,185.6 L262.0,187.4 L258.9,189.4 L255.9,191.6ZM278.8,179.8 L278.6,180.0 L278.6,180.3 L278.6,180.5 L278.7,180.8 L282.3,179.6 L285.9,178.7 L289.5,177.9 L293.2,177.2 L293.2,177.1 L293.2,177.0 L293.2,176.8 L293.3,176.7 L289.6,177.2 L285.9,177.9 L282.3,178.7ZM255.2,313.6 L255.6,313.8 L256.0,314.2 L257.4,313.3 L258.0,313.7 L255.3,311.6 L252.6,309.2 L250.1,306.8 L247.7,304.2 L246.9,303.7 L246.3,303.2 L244.6,303.7 L244.2,303.3 L246.8,306.0 L249.5,308.7 L252.3,311.2ZM235.5,291.1 L237.2,290.9 L237.8,291.5 L238.5,292.1 L239.4,292.7 L237.7,289.5 L236.2,286.3 L234.8,283.0 L233.6,279.6 L232.6,278.9 L231.8,278.2 L231.1,277.6 L230.7,276.9 L232.0,280.4 L233.4,283.8 L235.0,287.1ZM227.3,262.6 L227.8,263.3 L228.5,264.0 L229.3,264.7 L230.4,265.4 L230.1,261.7 L229.9,258.1 L229.9,254.4 L230.0,250.7 L229.0,250.0 L228.1,249.2 L227.4,248.5 L226.9,247.8 L226.7,251.5 L226.8,255.2 L227.0,258.9ZM229.4,233.2 L229.9,233.9 L230.5,234.6 L231.4,235.3 L232.5,236.0 L233.5,232.4 L234.7,228.9 L236.1,225.4 L237.6,222.0 L236.6,221.3 L235.8,220.6 L235.1,220.0 L234.7,219.3 L233.1,222.7 L231.7,226.2 L230.5,229.7ZM242.6,206.7 L243.0,207.3 L243.6,207.9 L244.3,208.5 L245.2,209.1 L247.5,206.1 L249.9,203.2 L252.5,200.4 L255.1,197.8 L254.3,197.3 L253.7,196.8 L253.2,196.3 L252.9,195.8 L250.1,198.3 L247.5,201.0 L245.0,203.8ZM265.1,187.0 L265.3,187.4 L265.7,187.8 L266.2,188.2 L266.8,188.6 L270.0,186.7 L273.2,184.9 L276.5,183.3 L279.9,181.9 L279.5,181.6 L279.1,181.3 L278.9,181.0 L278.7,180.8 L275.2,182.1 L271.7,183.6 L268.3,185.2ZM293.2,177.2 L293.3,177.4 L293.5,177.5 L293.6,177.7 L293.8,177.8 L297.4,177.2 L301.0,176.8 L304.6,176.6 L308.2,176.6 L308.2,176.6 L308.2,176.6 L308.2,176.6 L308.2,176.6 L304.4,176.5 L300.7,176.5 L297.0,176.8ZM269.5,322.3 L270.0,322.6 L270.6,322.8 L271.9,321.7 L272.6,322.0 L269.7,320.6 L266.9,319.0 L264.2,317.2 L261.6,315.3 L260.5,314.9 L259.6,314.5 L258.8,314.1 L258.0,313.7 L260.9,315.8 L263.1,318.9 L266.3,320.7ZM247.7,304.2 L248.6,304.7 L249.6,305.2 L250.8,305.7 L252.1,306.3 L250.1,303.6 L248.1,300.9 L246.3,298.0 L244.7,295.1 L243.1,294.5 L241.7,293.9 L240.5,293.3 L239.4,292.7 L241.2,295.7 L243.2,298.7 L245.4,301.5ZM233.6,279.6 L234.8,280.2 L236.1,280.9 L237.7,281.6 L239.4,282.2 L238.5,278.8 L237.7,275.3 L237.1,271.8 L236.6,268.2 L234.8,267.5 L233.1,266.8 L231.7,266.1 L230.4,265.4 L231.0,269.0 L231.7,272.6 L232.5,276.1ZM230.0,250.7 L231.3,251.4 L232.8,252.1 L234.5,252.9 L236.4,253.6 L236.7,249.9 L237.2,246.2 L237.9,242.5 L238.7,238.9 L236.8,238.2 L235.2,237.4 L233.7,236.7 L232.5,236.0 L231.6,239.7 L230.9,243.3 L230.4,247.0ZM237.6,222.0 L238.8,222.6 L240.2,223.3 L241.7,224.0 L243.4,224.6 L245.0,221.2 L246.7,217.9 L248.5,214.6 L250.5,211.5 L248.9,210.9 L247.6,210.3 L246.3,209.7 L245.2,209.1 L243.1,212.2 L241.1,215.3 L239.3,218.6ZM255.1,197.8 L256.0,198.3 L257.1,198.8 L258.3,199.3 L259.6,199.9 L262.1,197.2 L264.8,194.8 L267.5,192.4 L270.3,190.2 L269.3,189.8 L268.3,189.4 L267.5,189.0 L266.8,188.6 L263.7,190.7 L260.7,192.9 L257.9,195.3ZM279.9,181.9 L280.4,182.1 L280.9,182.4 L281.6,182.7 L282.3,183.0 L285.4,181.6 L288.6,180.3 L291.8,179.3 L295.1,178.4 L294.7,178.2 L294.4,178.1 L294.1,177.9 L293.8,177.8 L290.3,178.5 L286.8,179.5 L283.3,180.6ZM284.4,327.6 L284.8,327.7 L285.2,327.8 L285.7,327.9 L286.2,328.0 L283.5,327.4 L281.2,325.1 L278.6,324.2 L276.1,323.1 L275.1,322.8 L274.2,322.5 L273.4,322.3 L272.6,322.0 L275.5,323.2 L278.1,325.8 L281.2,326.7ZM261.6,315.3 L262.7,315.7 L263.9,316.1 L265.3,316.5 L266.7,316.9 L264.5,315.0 L262.5,312.9 L260.5,310.6 L258.7,308.2 L256.8,307.8 L255.2,307.3 L253.6,306.8 L252.1,306.3 L254.3,308.7 L256.6,311.1 L259.0,313.3ZM244.7,295.1 L246.4,295.7 L248.2,296.3 L250.2,296.8 L252.3,297.4 L251.0,294.4 L249.9,291.3 L248.8,288.1 L247.9,284.8 L245.6,284.2 L243.4,283.5 L241.3,282.9 L239.4,282.2 L240.5,285.6 L241.7,288.8 L243.1,292.0ZM236.6,268.2 L238.6,268.9 L240.8,269.6 L243.2,270.3 L245.7,271.0 L245.4,267.4 L245.3,263.7 L245.4,260.1 L245.6,256.4 L243.0,255.7 L240.6,255.0 L238.4,254.3 L236.4,253.6 L236.2,257.3 L236.2,260.9 L236.3,264.6ZM238.7,238.9 L240.7,239.6 L242.9,240.3 L245.2,241.0 L247.7,241.6 L248.6,238.0 L249.6,234.4 L250.7,230.8 L252.0,227.3 L249.6,226.6 L247.4,226.0 L245.3,225.3 L243.4,224.6 L242.0,228.1 L240.8,231.7 L239.6,235.2ZM250.5,211.5 L252.2,212.1 L254.1,212.7 L256.0,213.2 L258.2,213.8 L260.0,210.7 L261.9,207.6 L264.0,204.7 L266.1,201.9 L264.3,201.4 L262.6,200.9 L261.0,200.4 L259.6,199.9 L257.1,202.6 L254.8,205.4 L252.6,208.4ZM270.3,190.2 L271.4,190.6 L272.7,191.0 L274.0,191.4 L275.4,191.8 L277.9,189.6 L280.5,187.6 L283.2,185.8 L285.8,184.1 L284.8,183.8 L283.9,183.5 L283.1,183.2 L282.3,183.0 L279.2,184.5 L276.2,186.3 L273.2,188.2ZM295.1,178.4 L295.5,178.5 L295.9,178.6 L296.4,178.8 L296.9,178.9 L299.7,178.1 L302.5,177.4 L305.3,176.9 L308.2,176.6 L308.2,176.6 L308.2,176.6 L308.2,176.6 L308.2,176.6 L304.9,176.7 L301.6,177.1 L298.3,177.6ZM276.1,323.1 L277.1,323.3 L278.2,323.6 L279.4,323.8 L280.6,324.1 L278.7,322.9 L276.8,321.6 L275.0,320.0 L273.2,318.4 L271.5,318.0 L269.8,317.7 L268.2,317.3 L266.7,316.9 L268.9,318.7 L271.2,320.3 L273.6,321.8ZM258.7,308.2 L260.6,308.7 L262.6,309.2 L264.7,309.7 L267.0,310.1 L265.6,307.7 L264.3,305.1 L263.2,302.4 L262.1,299.6 L259.5,299.1 L257.0,298.5 L254.6,298.0 L252.3,297.4 L253.7,300.3 L255.3,303.1 L256.9,305.7ZM247.9,284.8 L250.4,285.5 L253.1,286.1 L255.9,286.7 L258.8,287.3 L258.2,283.9 L257.8,280.5 L257.4,277.1 L257.2,273.6 L254.1,272.9 L251.1,272.3 L248.3,271.6 L245.7,271.0 L246.0,274.5 L246.5,278.0 L247.2,281.5ZM245.6,256.4 L248.3,257.1 L251.2,257.7 L254.2,258.4 L257.3,259.0 L257.6,255.3 L258.1,251.6 L258.6,247.9 L259.2,244.2 L256.1,243.6 L253.2,242.9 L250.4,242.3 L247.7,241.6 L247.0,245.3 L246.4,249.0 L245.9,252.7ZM252.0,227.3 L254.5,227.9 L257.1,228.5 L259.9,229.1 L262.8,229.7 L263.9,226.2 L265.2,222.7 L266.5,219.3 L267.9,216.0 L265.3,215.5 L262.8,214.9 L260.4,214.4 L258.2,213.8 L256.4,217.1 L254.8,220.4 L253.3,223.8ZM266.1,201.9 L268.0,202.3 L270.0,202.8 L272.2,203.3 L274.4,203.7 L276.2,200.9 L278.1,198.2 L280.0,195.7 L282.0,193.3 L280.2,192.9 L278.5,192.5 L276.9,192.2 L275.4,191.8 L273.0,194.1 L270.6,196.6 L268.3,199.1ZM285.8,184.1 L286.9,184.3 L288.0,184.6 L289.1,184.8 L290.3,185.1 L292.5,183.4 L294.7,181.9 L296.9,180.6 L299.2,179.4 L298.6,179.3 L298.0,179.2 L297.4,179.0 L296.9,178.9 L294.1,179.9 L291.3,181.1 L288.5,182.5ZM288.6,328.5 L289.2,328.6 L290.1,327.2 L290.8,327.3 L291.5,327.4 L290.1,327.1 L288.6,326.6 L287.2,325.8 L285.8,324.9 L284.5,324.7 L283.1,324.5 L281.8,324.3 L280.6,324.1 L282.6,325.1 L284.6,325.9 L286.7,326.5ZM273.2,318.4 L275.0,318.7 L276.9,319.0 L278.8,319.3 L280.8,319.6 L279.7,317.9 L278.6,316.0 L277.6,313.9 L276.7,311.7 L274.1,311.3 L271.7,310.9 L269.3,310.5 L267.0,310.1 L268.4,312.4 L269.9,314.5 L271.5,316.5ZM262.1,299.6 L264.8,300.1 L267.6,300.6 L270.5,301.1 L273.5,301.5 L272.9,298.6 L272.3,295.7 L271.9,292.6 L271.5,289.4 L268.1,288.9 L264.9,288.4 L261.8,287.8 L258.8,287.3 L259.4,290.5 L260.2,293.6 L261.1,296.7ZM257.2,273.6 L260.4,274.1 L263.7,274.7 L267.1,275.3 L270.6,275.8 L270.6,272.3 L270.7,268.6 L270.8,265.0 L271.0,261.3 L267.5,260.8 L264.0,260.2 L260.6,259.6 L257.3,259.0 L257.1,262.7 L257.0,266.4 L257.0,270.0ZM259.2,244.2 L262.4,244.8 L265.7,245.4 L269.2,245.9 L272.7,246.5 L273.3,242.8 L273.9,239.1 L274.7,235.4 L275.5,231.8 L272.2,231.3 L268.9,230.8 L265.8,230.2 L262.8,229.7 L261.8,233.2 L260.8,236.9 L260.0,240.5ZM267.9,216.0 L270.6,216.5 L273.5,217.0 L276.4,217.5 L279.3,217.9 L280.4,214.6 L281.6,211.4 L282.8,208.3 L284.1,205.3 L281.6,204.9 L279.1,204.5 L276.7,204.1 L274.4,203.7 L272.7,206.6 L271.0,209.6 L269.4,212.8ZM282.0,193.3 L283.8,193.6 L285.6,193.9 L287.6,194.2 L289.6,194.5 L291.0,192.2 L292.5,189.9 L294.0,187.9 L295.6,185.9 L294.2,185.7 L292.9,185.5 L291.6,185.3 L290.3,185.1 L288.2,186.9 L286.1,188.8 L284.0,191.0ZM299.2,179.4 L299.8,179.5 L300.5,179.7 L301.1,179.8 L301.8,179.9 L303.4,178.8 L305.0,177.9 L306.6,177.1 L308.2,176.6 L308.2,176.6 L308.2,176.6 L308.2,176.6 L308.2,176.6 L305.9,177.0 L303.7,177.6 L301.4,178.4ZM297.5,329.6 L297.5,329.6 L297.5,329.6 L297.5,329.6 L297.5,329.6 L296.7,329.6 L295.9,329.5 L295.1,329.4 L294.5,327.8 L293.7,327.7 L293.0,327.6 L292.2,327.5 L291.5,327.4 L292.8,329.2 L294.3,329.4 L295.9,329.5ZM285.8,324.9 L287.3,325.1 L288.7,325.3 L290.2,325.5 L291.6,325.7 L291.0,324.7 L290.4,323.5 L289.8,322.2 L289.2,320.7 L287.1,320.5 L285.0,320.2 L282.9,319.9 L280.8,319.6 L282.0,321.2 L283.2,322.6 L284.5,323.9ZM276.7,311.7 L279.3,312.1 L281.9,312.4 L284.6,312.8 L287.3,313.1 L287.0,310.8 L286.6,308.3 L286.3,305.8 L286.1,303.1 L282.8,302.7 L279.7,302.3 L276.5,301.9 L273.5,301.5 L274.2,304.3 L274.9,306.9 L275.8,309.4ZM271.5,289.4 L274.8,289.9 L278.3,290.3 L281.8,290.7 L285.4,291.1 L285.4,287.9 L285.4,284.6 L285.4,281.1 L285.5,277.7 L281.7,277.2 L277.9,276.8 L274.2,276.3 L270.6,275.8 L270.7,279.3 L270.9,282.7 L271.1,286.1ZM271.0,261.3 L274.7,261.8 L278.5,262.3 L282.3,262.8 L286.2,263.2 L286.4,259.5 L286.8,255.8 L287.1,252.0 L287.5,248.3 L283.7,247.9 L280.0,247.4 L276.3,247.0 L272.7,246.5 L272.2,250.2 L271.7,253.9 L271.3,257.6ZM275.5,231.8 L278.9,232.3 L282.3,232.7 L285.9,233.1 L289.4,233.5 L290.0,229.9 L290.6,226.4 L291.2,222.9 L291.9,219.5 L288.7,219.1 L285.5,218.7 L282.4,218.3 L279.3,217.9 L278.3,221.3 L277.3,224.7 L276.4,228.2ZM284.1,205.3 L286.7,205.7 L289.3,206.0 L292.0,206.4 L294.8,206.7 L295.6,203.7 L296.3,200.9 L297.2,198.2 L298.0,195.6 L295.8,195.3 L293.7,195.1 L291.6,194.8 L289.6,194.5 L288.1,197.0 L286.8,199.7 L285.4,202.4ZM295.6,185.9 L297.0,186.1 L298.4,186.3 L299.9,186.5 L301.4,186.7 L302.2,184.8 L303.1,183.1 L303.9,181.6 L304.8,180.2 L304.0,180.2 L303.3,180.1 L302.6,180.0 L301.8,179.9 L300.3,181.1 L298.7,182.6 L297.1,184.2ZM294.5,327.8 L295.2,327.9 L296.0,328.0 L296.8,328.0 L297.6,328.1 L297.6,327.9 L297.6,327.5 L297.6,326.9 L297.7,326.2 L296.2,326.1 L294.6,326.0 L293.1,325.8 L291.6,325.7 L292.3,326.5 L293.0,327.1 L293.7,327.5ZM289.2,320.7 L291.4,320.9 L293.6,321.1 L295.8,321.3 L298.0,321.5 L298.1,319.8 L298.3,318.1 L298.4,316.1 L298.5,314.0 L295.7,313.8 L292.9,313.6 L290.1,313.3 L287.3,313.1 L287.8,315.2 L288.2,317.2 L288.7,319.0ZM286.1,303.1 L289.3,303.4 L292.6,303.7 L295.9,304.0 L299.2,304.2 L299.4,301.5 L299.6,298.5 L299.8,295.5 L300.1,292.4 L296.4,292.1 L292.7,291.8 L289.0,291.5 L285.4,291.1 L285.5,294.3 L285.7,297.3 L285.8,300.3ZM285.5,277.7 L289.3,278.1 L293.2,278.4 L297.1,278.7 L301.0,279.0 L301.2,275.5 L301.5,271.9 L301.7,268.3 L302.0,264.6 L298.0,264.3 L294.0,264.0 L290.1,263.6 L286.2,263.2 L285.9,266.9 L285.7,270.5 L285.6,274.1ZM287.5,248.3 L291.4,248.7 L295.2,249.1 L299.1,249.4 L303.0,249.7 L303.3,245.9 L303.6,242.2 L303.8,238.5 L304.1,234.8 L300.4,234.6 L296.7,234.2 L293.1,233.9 L289.4,233.5 L288.9,237.2 L288.4,240.9 L287.9,244.6ZM291.9,219.5 L295.2,219.8 L298.5,220.1 L301.8,220.4 L305.1,220.6 L305.3,217.3 L305.5,214.0 L305.8,210.8 L306.0,207.6 L303.2,207.4 L300.4,207.2 L297.6,206.9 L294.8,206.7 L294.0,209.7 L293.3,212.9 L292.6,216.1ZM298.0,195.6 L300.2,195.8 L302.3,196.0 L304.6,196.2 L306.8,196.4 L307.0,193.8 L307.1,191.5 L307.3,189.3 L307.4,187.2 L305.9,187.1 L304.4,186.9 L302.9,186.8 L301.4,186.7 L300.5,188.7 L299.6,190.8 L298.8,193.1ZM304.8,180.2 L305.6,180.3 L306.3,180.4 L307.1,180.4 L307.9,180.5 L308.0,179.3 L308.0,178.2 L308.1,177.3 L308.2,176.6 L308.2,176.6 L308.2,176.6 L308.2,176.6 L308.2,176.6 L307.3,177.2 L306.5,178.0 L305.6,179.1ZM297.5,329.6 L297.5,329.6 L297.5,329.6 L297.5,329.6 L297.5,329.6 L298.3,329.7 L299.0,329.7 L299.8,329.8 L300.7,328.2 L299.9,328.2 L299.1,328.2 L298.3,328.1 L297.6,328.1 L297.5,329.6 L297.5,329.6 L297.5,329.6ZM297.7,326.2 L299.2,326.3 L300.8,326.4 L302.3,326.5 L303.8,326.5 L304.6,325.6 L305.3,324.6 L306.1,323.3 L306.9,321.9 L304.7,321.8 L302.5,321.7 L300.2,321.6 L298.0,321.5 L297.9,322.9 L297.8,324.2 L297.8,325.3ZM298.5,314.0 L301.4,314.2 L304.2,314.4 L307.0,314.5 L309.8,314.6 L310.5,312.4 L311.2,310.1 L311.8,307.6 L312.4,304.9 L309.2,304.8 L305.9,304.6 L302.6,304.5 L299.2,304.2 L299.0,306.9 L298.9,309.4 L298.7,311.8ZM300.1,292.4 L303.8,292.7 L307.4,292.9 L311.1,293.0 L314.7,293.2 L315.2,290.0 L315.7,286.7 L316.2,283.3 L316.6,279.8 L312.7,279.7 L308.8,279.5 L304.9,279.3 L301.0,279.0 L300.8,282.5 L300.5,285.9 L300.3,289.2ZM302.0,264.6 L306.0,264.9 L310.0,265.1 L314.0,265.3 L317.9,265.4 L318.1,261.7 L318.3,258.0 L318.5,254.2 L318.6,250.5 L314.8,250.3 L310.9,250.1 L307.0,249.9 L303.0,249.7 L302.8,253.4 L302.5,257.2 L302.3,260.9ZM304.1,234.8 L307.8,235.1 L311.5,235.3 L315.1,235.5 L318.8,235.6 L318.7,231.9 L318.6,228.3 L318.5,224.8 L318.3,221.3 L315.0,221.2 L311.7,221.0 L308.4,220.9 L305.1,220.6 L304.8,224.1 L304.6,227.6 L304.3,231.2ZM306.0,207.6 L308.8,207.8 L311.6,208.0 L314.4,208.1 L317.2,208.2 L316.9,205.2 L316.5,202.3 L316.1,199.5 L315.6,196.8 L313.4,196.7 L311.2,196.6 L309.0,196.5 L306.8,196.4 L306.6,199.0 L306.4,201.8 L306.2,204.6ZM307.4,187.2 L308.9,187.3 L310.5,187.4 L312.0,187.4 L313.5,187.5 L312.9,185.6 L312.3,183.8 L311.6,182.1 L311.0,180.7 L310.2,180.6 L309.4,180.6 L308.7,180.6 L307.9,180.5 L307.8,181.9 L307.7,183.5 L307.6,185.3ZM300.7,328.2 L301.4,328.3 L302.2,328.3 L302.9,328.3 L303.6,328.3 L305.1,328.1 L306.6,327.8 L308.1,327.3 L309.6,326.6 L308.2,326.6 L306.7,326.6 L305.3,326.6 L303.8,326.5 L303.0,327.2 L302.2,327.7 L301.4,328.1ZM306.9,321.9 L309.0,322.0 L311.2,322.0 L313.3,322.1 L315.3,322.1 L316.7,320.5 L318.0,318.7 L319.3,316.9 L320.6,314.8 L317.9,314.8 L315.3,314.8 L312.5,314.7 L309.8,314.6 L309.1,316.7 L308.3,318.6 L307.6,320.3ZM312.4,304.9 L315.7,305.0 L318.9,305.1 L322.0,305.1 L325.1,305.1 L326.1,302.4 L327.1,299.5 L328.0,296.5 L328.8,293.4 L325.4,293.4 L321.9,293.4 L318.3,293.3 L314.7,293.2 L314.2,296.3 L313.6,299.3 L313.1,302.2ZM316.6,279.8 L320.4,280.0 L324.2,280.0 L327.9,280.1 L331.5,280.1 L332.0,276.5 L332.5,273.0 L332.8,269.3 L333.1,265.7 L329.4,265.7 L325.6,265.6 L321.8,265.5 L317.9,265.4 L317.6,269.1 L317.3,272.7 L317.0,276.3ZM318.6,250.5 L322.5,250.6 L326.2,250.7 L329.9,250.7 L333.6,250.7 L333.5,247.0 L333.3,243.2 L333.1,239.5 L332.8,235.8 L329.4,235.8 L325.9,235.8 L322.4,235.7 L318.8,235.6 L318.8,239.3 L318.8,243.0 L318.7,246.7ZM318.3,221.3 L321.5,221.4 L324.7,221.5 L327.9,221.5 L331.0,221.5 L330.3,218.1 L329.6,214.8 L328.8,211.5 L328.0,208.4 L325.4,208.4 L322.7,208.4 L320.0,208.3 L317.2,208.2 L317.5,211.4 L317.8,214.6 L318.1,217.9ZM315.6,196.8 L317.8,196.9 L319.9,196.9 L322.0,196.9 L324.1,196.9 L322.9,194.4 L321.8,192.0 L320.6,189.7 L319.3,187.6 L317.9,187.6 L316.5,187.6 L315.0,187.6 L313.5,187.5 L314.1,189.6 L314.6,191.9 L315.1,194.3ZM311.0,180.7 L311.7,180.7 L312.5,180.7 L313.2,180.7 L314.0,180.7 L312.5,179.4 L311.1,178.3 L309.6,177.3 L308.2,176.6 L308.2,176.6 L308.2,176.6 L308.2,176.6 L308.2,176.6 L308.9,177.3 L309.6,178.3 L310.3,179.4ZM297.5,329.6 L297.5,329.6 L297.5,329.6 L297.5,329.6 L297.5,329.6 L299.7,329.8 L302.0,329.8 L304.2,329.8 L306.4,329.8 L305.8,329.8 L305.0,328.3 L304.3,328.3 L303.6,328.3 L302.1,329.8 L300.6,329.8 L299.0,329.7ZM309.6,326.6 L311.0,326.6 L312.3,326.6 L313.7,326.5 L314.9,326.5 L317.0,325.6 L319.1,324.5 L321.1,323.3 L323.0,321.8 L321.2,321.9 L319.3,322.0 L317.3,322.0 L315.3,322.1 L313.9,323.5 L312.5,324.7 L311.1,325.7ZM320.6,314.8 L323.1,314.8 L325.6,314.7 L328.0,314.6 L330.4,314.5 L332.1,312.3 L333.7,310.0 L335.2,307.4 L336.7,304.8 L333.9,304.9 L331.1,305.0 L328.1,305.1 L325.1,305.1 L324.0,307.7 L322.9,310.2 L321.8,312.6ZM328.8,293.4 L332.2,293.4 L335.4,293.3 L338.6,293.2 L341.7,293.1 L342.7,289.8 L343.6,286.5 L344.4,283.2 L345.2,279.7 L341.9,279.9 L338.5,280.0 L335.1,280.0 L331.5,280.1 L330.9,283.5 L330.3,286.9 L329.6,290.2ZM333.1,265.7 L336.7,265.6 L340.3,265.5 L343.7,265.4 L347.0,265.3 L347.2,261.6 L347.3,257.8 L347.3,254.1 L347.2,250.3 L344.0,250.5 L340.6,250.6 L337.1,250.7 L333.6,250.7 L333.6,254.5 L333.5,258.2 L333.3,261.9ZM332.8,235.8 L336.2,235.8 L339.4,235.7 L342.6,235.6 L345.7,235.5 L345.0,231.8 L344.3,228.2 L343.5,224.7 L342.5,221.2 L339.8,221.3 L336.9,221.4 L334.0,221.5 L331.0,221.5 L331.5,225.0 L332.0,228.6 L332.5,232.2ZM328.0,208.4 L330.6,208.4 L333.1,208.3 L335.5,208.2 L337.8,208.1 L336.4,205.1 L335.0,202.2 L333.4,199.4 L331.8,196.7 L329.9,196.8 L328.0,196.9 L326.1,196.9 L324.1,196.9 L325.1,199.6 L326.1,202.4 L327.1,205.4ZM319.3,187.6 L320.7,187.6 L322.1,187.6 L323.4,187.5 L324.6,187.5 L322.7,185.5 L320.7,183.7 L318.7,182.1 L316.7,180.6 L316.0,180.7 L315.4,180.7 L314.7,180.7 L314.0,180.7 L315.3,182.2 L316.7,183.8 L318.0,185.6ZM306.4,329.8 L307.1,329.7 L307.7,329.7 L308.3,329.6 L308.8,329.6 L311.6,329.3 L314.2,327.4 L316.9,326.9 L319.5,326.1 L318.4,326.2 L317.3,326.3 L316.2,326.4 L314.9,326.5 L312.8,327.2 L310.7,327.7 L308.5,328.1ZM323.0,321.8 L324.8,321.7 L326.5,321.6 L328.2,321.5 L329.7,321.3 L332.1,319.7 L334.4,317.9 L336.7,316.0 L338.9,313.9 L336.9,314.1 L334.8,314.2 L332.6,314.4 L330.4,314.5 L328.6,316.6 L326.8,318.5 L325.0,320.3ZM336.7,304.8 L339.3,304.7 L341.9,304.5 L344.3,304.3 L346.6,304.0 L348.3,301.2 L349.9,298.3 L351.4,295.3 L352.7,292.2 L350.2,292.4 L347.4,292.7 L344.6,292.9 L341.7,293.1 L340.5,296.2 L339.3,299.2 L338.0,302.0ZM345.2,279.7 L348.3,279.5 L351.3,279.3 L354.2,279.1 L356.9,278.8 L357.6,275.2 L358.2,271.6 L358.7,268.0 L359.0,264.3 L356.2,264.6 L353.3,264.9 L350.2,265.1 L347.0,265.3 L346.7,269.0 L346.3,272.6 L345.8,276.2ZM347.2,250.3 L350.3,250.2 L353.4,249.9 L356.2,249.7 L359.0,249.4 L358.6,245.7 L358.1,241.9 L357.5,238.2 L356.8,234.6 L354.2,234.9 L351.5,235.1 L348.6,235.3 L345.7,235.5 L346.2,239.2 L346.7,242.9 L347.0,246.6ZM342.5,221.2 L345.2,221.1 L347.7,220.9 L350.2,220.7 L352.5,220.4 L351.1,217.0 L349.6,213.8 L348.0,210.6 L346.3,207.5 L344.3,207.7 L342.3,207.8 L340.1,208.0 L337.8,208.1 L339.1,211.3 L340.4,214.5 L341.5,217.8ZM331.8,196.7 L333.6,196.6 L335.3,196.5 L336.9,196.4 L338.4,196.2 L336.3,193.7 L334.0,191.4 L331.6,189.1 L329.2,187.1 L328.2,187.2 L327.0,187.3 L325.9,187.4 L324.6,187.5 L326.5,189.6 L328.3,191.8 L330.1,194.2ZM316.7,180.6 L317.3,180.6 L317.9,180.6 L318.5,180.5 L319.0,180.5 L316.3,179.2 L313.6,178.2 L310.9,177.3 L308.2,176.6 L308.2,176.6 L308.2,176.6 L308.2,176.6 L308.2,176.6 L310.3,177.3 L312.5,178.3 L314.6,179.4ZM319.5,326.1 L320.5,326.0 L321.5,325.8 L322.3,325.7 L323.2,325.5 L326.2,324.5 L329.2,323.3 L332.1,322.0 L335.0,320.5 L333.8,320.7 L332.5,320.9 L331.2,321.1 L329.7,321.3 L327.2,322.8 L324.7,324.1 L322.1,325.2ZM338.9,313.9 L340.7,313.6 L342.5,313.4 L344.1,313.1 L345.6,312.8 L348.0,310.5 L350.3,308.0 L352.5,305.5 L354.6,302.8 L352.8,303.1 L350.9,303.4 L348.8,303.7 L346.6,304.0 L344.8,306.7 L342.9,309.2 L340.9,311.6ZM352.7,292.2 L355.2,291.9 L357.4,291.5 L359.6,291.2 L361.5,290.8 L362.9,287.5 L364.2,284.2 L365.3,280.8 L366.3,277.3 L364.2,277.7 L361.9,278.1 L359.5,278.4 L356.9,278.8 L356.1,282.2 L355.1,285.6 L354.0,288.9ZM359.0,264.3 L361.6,264.0 L364.1,263.6 L366.4,263.2 L368.5,262.8 L368.7,259.1 L368.7,255.4 L368.6,251.7 L368.3,247.9 L366.2,248.3 L364.0,248.7 L361.5,249.1 L359.0,249.4 L359.2,253.2 L359.3,256.9 L359.2,260.6ZM356.8,234.6 L359.2,234.3 L361.5,233.9 L363.6,233.6 L365.6,233.2 L364.5,229.6 L363.3,226.1 L361.9,222.6 L360.4,219.2 L358.6,219.5 L356.7,219.8 L354.7,220.1 L352.5,220.4 L353.7,223.9 L354.9,227.4 L355.9,231.0ZM346.3,207.5 L348.2,207.2 L349.9,207.0 L351.5,206.7 L353.0,206.4 L350.9,203.5 L348.6,200.6 L346.2,197.9 L343.7,195.4 L342.6,195.6 L341.3,195.8 L339.9,196.0 L338.4,196.2 L340.6,198.8 L342.6,201.6 L344.5,204.5ZM329.2,187.1 L330.2,187.0 L331.2,186.8 L332.1,186.7 L332.9,186.5 L330.0,184.7 L327.0,183.0 L324.0,181.5 L320.9,180.2 L320.5,180.2 L320.0,180.3 L319.5,180.4 L319.0,180.5 L321.6,181.9 L324.2,183.4 L326.8,185.2ZM310.7,329.4 L311.1,329.4 L311.5,329.4 L311.8,329.3 L312.1,329.3 L315.7,328.8 L319.2,328.1 L322.7,327.3 L326.2,326.3 L325.6,326.4 L325.0,326.6 L323.9,325.3 L323.2,325.5 L320.1,326.3 L317.2,328.5 L314.0,329.0ZM335.0,320.5 L336.1,320.2 L337.1,320.0 L337.9,319.7 L338.7,319.4 L341.7,317.6 L344.7,315.7 L347.6,313.6 L350.3,311.4 L349.3,311.8 L348.2,312.1 L347.0,312.5 L345.6,312.8 L343.1,314.9 L340.5,316.9 L337.8,318.8ZM354.6,302.8 L356.2,302.4 L357.6,302.0 L358.9,301.6 L360.1,301.1 L362.2,298.2 L364.2,295.2 L366.0,292.1 L367.7,288.9 L366.4,289.4 L365.0,289.9 L363.3,290.3 L361.5,290.8 L360.0,293.9 L358.3,297.0 L356.5,299.9ZM366.3,277.3 L368.2,276.8 L369.9,276.4 L371.4,275.9 L372.8,275.3 L373.6,271.8 L374.3,268.2 L374.9,264.5 L375.2,260.8 L373.8,261.4 L372.3,261.9 L370.5,262.4 L368.5,262.8 L368.2,266.5 L367.7,270.1 L367.1,273.7ZM368.3,247.9 L370.2,247.5 L371.9,247.0 L373.5,246.5 L374.8,246.0 L374.3,242.3 L373.6,238.6 L372.7,235.0 L371.7,231.4 L370.4,231.8 L369.0,232.3 L367.4,232.8 L365.6,233.2 L366.5,236.8 L367.2,240.5 L367.9,244.2ZM360.4,219.2 L362.0,218.8 L363.5,218.4 L364.8,218.0 L365.9,217.5 L364.1,214.2 L362.1,211.1 L360.0,208.0 L357.7,205.0 L356.8,205.4 L355.7,205.7 L354.4,206.1 L353.0,206.4 L355.1,209.4 L357.0,212.6 L358.8,215.8ZM343.7,195.4 L344.8,195.1 L345.8,194.8 L346.7,194.6 L347.4,194.3 L344.6,191.9 L341.6,189.7 L338.6,187.6 L335.4,185.7 L334.9,186.0 L334.3,186.1 L333.6,186.3 L332.9,186.5 L335.7,188.5 L338.5,190.6 L341.2,192.9ZM320.9,180.2 L321.2,180.1 L321.6,180.0 L321.9,179.9 L322.2,179.8 L318.7,178.7 L315.2,177.8 L311.7,177.1 L308.2,176.6 L308.2,176.6 L308.2,176.6 L308.2,176.6 L308.2,176.6 L311.4,177.2 L314.6,178.0 L317.7,179.0ZM326.2,326.3 L326.7,326.1 L327.1,326.0 L327.4,325.9 L327.7,325.8 L331.3,324.5 L334.8,323.0 L338.2,321.4 L341.5,319.6 L341.1,319.8 L340.6,320.1 L339.4,319.1 L338.7,319.4 L335.6,321.0 L332.9,323.8 L329.6,325.1ZM350.3,311.4 L351.1,311.0 L351.8,310.6 L353.4,311.3 L353.8,310.9 L356.6,308.4 L359.3,305.7 L361.8,303.0 L364.2,300.1 L362.5,299.6 L361.9,300.1 L361.1,300.6 L360.1,301.1 L357.8,303.9 L355.5,306.5 L352.9,309.0ZM367.7,288.9 L368.8,288.4 L369.7,287.9 L370.4,287.3 L370.9,286.7 L372.5,283.4 L373.9,280.0 L375.2,276.5 L376.2,273.0 L375.7,273.6 L374.9,274.2 L373.9,274.8 L372.8,275.3 L371.8,278.8 L370.6,282.3 L369.2,285.6ZM375.2,260.8 L376.4,260.3 L377.4,259.7 L378.1,259.1 L378.7,258.4 L378.9,254.7 L378.9,251.0 L378.7,247.3 L378.3,243.6 L377.7,244.3 L377.0,244.9 L376.0,245.4 L374.8,246.0 L375.2,249.7 L375.4,253.4 L375.4,257.1ZM371.7,231.4 L372.8,230.8 L373.7,230.3 L374.4,229.7 L374.9,229.1 L373.7,225.6 L372.2,222.2 L370.6,218.8 L368.8,215.5 L368.4,216.0 L367.7,216.6 L366.9,217.0 L365.9,217.5 L367.6,220.9 L369.1,224.3 L370.5,227.8ZM357.7,205.0 L358.6,204.6 L359.3,204.2 L359.8,203.7 L360.2,203.3 L357.7,200.5 L355.1,197.9 L352.3,195.3 L349.4,192.9 L349.1,193.3 L348.6,193.6 L348.1,193.9 L347.4,194.3 L350.2,196.7 L352.8,199.4 L355.4,202.1ZM335.4,185.7 L335.9,185.5 L336.3,185.3 L336.6,185.1 L336.8,184.8 L333.4,183.2 L329.9,181.7 L326.4,180.4 L322.8,179.3 L322.7,179.4 L322.6,179.5 L322.4,179.7 L322.2,179.8 L325.6,181.0 L328.9,182.4 L332.2,184.0ZM364.2,300.1 L364.6,299.6 L364.9,299.2 L365.2,298.8 L365.4,298.6 L367.6,295.4 L369.7,292.1 L371.6,288.8 L373.4,285.3 L373.1,285.8 L372.9,286.3 L372.6,286.8 L370.9,286.7 L369.2,290.0 L367.3,293.1 L365.2,296.2ZM376.2,273.0 L376.6,272.4 L378.2,272.1 L378.4,271.5 L378.6,270.9 L379.4,267.2 L380.1,263.4 L380.5,259.7 L380.8,255.9 L380.8,256.6 L379.2,257.1 L379.1,257.8 L378.7,258.4 L378.4,262.1 L377.8,265.8 L377.1,269.4ZM378.3,243.6 L378.6,243.0 L378.8,242.4 L380.2,241.5 L380.1,240.8 L379.5,237.1 L378.7,233.4 L377.7,229.7 L376.6,226.2 L375.4,227.3 L375.4,227.9 L375.3,228.6 L374.9,229.1 L376.0,232.7 L377.0,236.3 L377.7,240.0ZM368.8,215.5 L369.1,215.0 L369.3,214.4 L369.2,213.9 L369.0,213.3 L367.1,210.2 L365.0,207.1 L362.7,204.2 L360.4,201.4 L360.5,201.9 L360.6,202.4 L360.5,202.8 L360.2,203.3 L362.6,206.2 L364.8,209.2 L366.9,212.3ZM349.4,192.9 L349.6,192.6 L349.7,192.2 L349.6,191.8 L349.5,191.5 L346.5,189.3 L343.4,187.3 L340.1,185.5 L336.8,183.8 L336.9,184.1 L337.0,184.3 L336.9,184.6 L336.8,184.8 L340.1,186.6 L343.3,188.6 L346.4,190.7ZM322.8,179.3 L322.9,179.2 L322.9,179.1 L322.9,178.9 L322.9,178.8 L319.3,178.0 L315.6,177.3 L311.9,176.9 L308.2,176.6 L308.2,176.6 L308.2,176.6 L308.2,176.6 L308.2,176.6 L311.9,177.0 L315.6,177.6 L319.2,178.4ZM376.6,226.2 L376.3,225.4 L376.0,224.6 L375.7,223.8 L375.3,222.8 L373.9,219.3 L372.2,216.0 L370.4,212.7 L368.5,209.6 L369.1,210.4 L369.5,211.2 L370.0,211.9 L369.0,213.3 L372.1,215.8 L373.8,219.2 L375.3,222.6ZM360.4,201.4 L360.0,200.9 L360.7,199.4 L360.1,198.8 L359.5,198.1 L357.0,195.5 L354.3,193.1 L351.5,190.8 L348.7,188.6 L349.3,189.0 L348.8,190.7 L349.2,191.1 L349.5,191.5 L352.4,193.7 L355.2,196.2 L357.8,198.7ZM336.8,183.8 L336.7,183.5 L336.4,183.3 L336.1,183.0 L335.6,182.7 L332.4,181.3 L329.1,180.1 L325.7,179.1 L322.3,178.2 L322.5,178.4 L322.7,178.5 L322.8,178.6 L322.9,178.8 L326.5,179.8 L330.0,181.0 L333.5,182.3ZM348.7,188.6 L348.0,188.1 L347.2,187.6 L346.4,187.0 L345.5,186.4 L342.6,184.6 L339.8,183.0 L336.8,181.5 L333.8,180.2 L334.6,180.5 L334.6,182.2 L335.1,182.4 L335.6,182.7 L338.8,184.3 L341.9,186.0 L345.7,186.6ZM322.3,178.2 L322.0,178.1 L321.7,177.9 L321.4,177.8 L321.0,177.7 L317.9,177.1 L314.7,176.8 L311.4,176.6 L308.2,176.6 L308.2,176.6 L308.2,176.6 L308.2,176.6 L308.2,176.6 L311.7,176.7 L315.3,177.0 L318.8,177.5ZM333.8,180.2 L333.1,179.8 L332.2,179.5 L331.3,179.1 L330.4,178.8 L327.7,177.8 L325.0,177.0 L321.9,177.7 L319.2,177.1 L319.7,177.3 L320.2,177.4 L320.6,177.5 L321.0,177.7 L324.2,178.4 L327.2,179.3 L330.8,178.9ZM319.2,177.1 L318.7,177.0 L318.2,176.9 L317.6,176.7 L317.0,176.6 L314.8,176.3 L312.6,176.2 L310.4,176.3 L308.2,176.6 L308.2,176.6 L308.2,176.6 L308.2,176.6 L308.2,176.6 L311.0,176.4 L313.8,176.5 L316.5,176.7ZM325.9,177.2 L324.7,176.9 L323.4,176.5 L322.0,176.1 L320.6,175.8 L319.1,175.5 L317.5,175.2 L316.0,174.9 L314.5,174.6 L315.2,174.7 L315.9,174.9 L316.3,176.5 L317.0,176.6 L319.4,175.5 L321.6,176.0 L323.7,176.6ZM314.5,174.6 L313.8,174.5 L313.0,174.4 L312.3,174.3 L311.5,174.2 L310.6,175.7 L309.8,175.8 L309.0,176.1 L308.2,176.6 L308.2,176.6 L308.2,176.6 L308.2,176.6 L308.2,176.6 L309.7,176.2 L311.3,176.0 L312.8,176.0Z" fill="#4b4b4b" clip-path="url(#sclip)"/>
</g>
</defs>
<g clip-path="url(#pclip)"><use href="#scene"/></g>
<g transform="translate(342.0,0)"><g clip-path="url(#pclip)"><use href="#scene"/></g></g>
<rect x="151.5" y="142.89999999999998" width="684.0" height="193.0" fill="none" stroke="#c8c8c8" stroke-width="0.7" stroke-dasharray="1,1.4" opacity="0.8"/>
<text x="836.60" y="145.80" font-size="9.5" fill="#585858" text-anchor="start" textLength="41.30" lengthAdjust="spacingAndGlyphs" >1920,540</text>
<defs>
<linearGradient id="gPur" x1="0" x2="0" y1="0" y2="1"><stop offset="0" stop-color="#b788b7"/><stop offset="1" stop-color="#8a5c8a"/></linearGradient>
<linearGradient id="gYel" x1="0" x2="0" y1="0" y2="1"><stop offset="0" stop-color="#e8e800"/><stop offset="1" stop-color="#a2a200"/></linearGradient>
<linearGradient id="gGry" x1="0" x2="0" y1="0" y2="1"><stop offset="0" stop-color="#ececec"/><stop offset="1" stop-color="#8e8e8e"/></linearGradient>
<linearGradient id="gBlu" x1="0" x2="0" y1="0" y2="1"><stop offset="0" stop-color="#3565ee"/><stop offset="1" stop-color="#2343b4"/></linearGradient>
<linearGradient id="gRed" x1="0" x2="0" y1="0" y2="1"><stop offset="0" stop-color="#b00000"/><stop offset="1" stop-color="#980000"/></linearGradient>
<clipPath id="ngclip"><rect x="0" y="543.5" width="1021" height="358.5"/></clipPath>
</defs>
<g clip-path="url(#ngclip)">
<line x1="0.00" y1="546.80" x2="153.30" y2="546.80" stroke="#f0aa50" stroke-width="1.4"/>
<polygon points="160.50,546.80 153.30,549.60 153.30,544.00" fill="#f0aa50" />
<line x1="264.20" y1="546.80" x2="221.20" y2="546.80" stroke="#f0aa50" stroke-width="1.4"/>
<polygon points="214.00,546.80 221.20,544.00 221.20,549.60" fill="#f0aa50" />
<line x1="171.50" y1="554.00" x2="0.00" y2="637.40" stroke="#0a0a0a" stroke-width="1.5" />
<line x1="187.40" y1="554.00" x2="187.40" y2="628.40" stroke="#f0aa50" stroke-width="1.4"/>
<polygon points="187.40,635.60 184.60,628.40 190.20,628.40" fill="#f0aa50" />
<line x1="187.40" y1="648.60" x2="187.40" y2="721.40" stroke="#f0aa50" stroke-width="1.4"/>
<polygon points="187.40,728.60 184.60,721.40 190.20,721.40" fill="#f0aa50" />
<line x1="162.40" y1="739.20" x2="44.71" y2="758.44" stroke="#0a0a0a" stroke-width="1.4"/>
<polygon points="37.60,759.60 44.25,755.68 45.16,761.20" fill="#0a0a0a" />
<line x1="187.20" y1="741.00" x2="187.20" y2="802.40" stroke="#0a0a0a" stroke-width="1.4"/>
<polygon points="187.20,809.60 184.40,802.40 190.00,802.40" fill="#0a0a0a" />
<line x1="213.40" y1="741.00" x2="406.62" y2="789.45" stroke="#f0aa50" stroke-width="1.4"/>
<polygon points="413.60,791.20 405.94,792.16 407.30,786.73" fill="#f0aa50" />
<line x1="486.90" y1="543.00" x2="486.90" y2="575.20" stroke="#f0aa50" stroke-width="1.4"/>
<polygon points="486.90,582.40 484.10,575.20 489.70,575.20" fill="#f0aa50" />
<line x1="496.60" y1="561.00" x2="491.29" y2="575.44" stroke="#f0aa50" stroke-width="1.4"/>
<polygon points="488.80,582.20 488.66,574.48 493.91,576.41" fill="#f0aa50" />
<line x1="559.60" y1="588.80" x2="520.40" y2="588.80" stroke="#f0aa50" stroke-width="1.4"/>
<polygon points="513.20,588.80 520.40,586.00 520.40,591.60" fill="#f0aa50" />
<line x1="557.20" y1="553.20" x2="565.30" y2="565.75" stroke="#f0aa50" stroke-width="1.4"/>
<polygon points="569.20,571.80 562.94,567.27 567.65,564.23" fill="#f0aa50" />
<line x1="600.60" y1="553.20" x2="592.04" y2="565.84" stroke="#f0aa50" stroke-width="1.4"/>
<polygon points="588.00,571.80 589.72,564.27 594.36,567.41" fill="#f0aa50" />
<line x1="489.80" y1="595.00" x2="527.85" y2="657.26" stroke="#0a0a0a" stroke-width="1.4"/>
<polygon points="531.60,663.40 525.46,658.72 530.23,655.80" fill="#0a0a0a" />
<line x1="485.90" y1="595.00" x2="442.79" y2="784.78" stroke="#f0aa50" stroke-width="1.4"/>
<polygon points="441.20,791.80 440.06,784.16 445.53,785.40" fill="#f0aa50" />
<line x1="439.20" y1="805.00" x2="439.20" y2="814.60" stroke="#f0aa50" stroke-width="1.4"/>
<polygon points="439.20,821.80 436.40,814.60 442.00,814.60" fill="#f0aa50" />
<line x1="452.00" y1="836.40" x2="522.20" y2="877.89" stroke="#f0aa50" stroke-width="1.3" stroke-dasharray="1.6,2.6"/>
<polygon points="527.80,881.20 520.78,880.30 523.63,875.48" fill="#f0aa50" />
<line x1="9.40" y1="769.00" x2="9.40" y2="786.80" stroke="#0a0a0a" stroke-width="1.4"/>
<polygon points="9.40,794.00 6.60,786.80 12.20,786.80" fill="#0a0a0a" />
<polygon points="0.00,750.60 4.60,757.20 0.00,757.20" fill="#0a0a0a" />
<polygon points="6.80,808.00 12.00,808.00 9.40,812.40" fill="#0a0a0a" />
<polygon points="184.60,839.00 190.00,839.00 187.30,843.60" fill="#0a0a0a" />
<polygon points="537.60,692.60 543.00,692.60 540.30,697.00" fill="#0a0a0a" />
<polygon points="411.00,797.00 414.40,799.00 411.00,801.00" fill="#f0aa50" />
<rect x="162.80" y="544.40" width="50.80" height="10.40" fill="#1c1c1c" />
<rect x="162.20" y="543.60" width="50.80" height="10.40" fill="url(#gRed)" />
<text x="187.60" y="551.20" font-size="7.6" fill="#f4f4f4" text-anchor="middle" textLength="54.60" lengthAdjust="spacingAndGlyphs" >ScanlineRender4</text>
<rect x="163.70" y="551.30" width="4.40" height="1.90" fill="#f00000" />
<rect x="168.35" y="551.30" width="4.40" height="1.90" fill="#00e000" />
<rect x="173.00" y="551.30" width="4.40" height="1.90" fill="#0000f0" />
<rect x="177.65" y="551.30" width="4.40" height="1.90" fill="#ffffff" />
<rect x="182.30" y="551.30" width="4.40" height="1.90" fill="#a000a0" />
<rect x="186.95" y="551.30" width="4.40" height="1.90" fill="#e000e0" />
<rect x="191.60" y="551.30" width="4.40" height="1.90" fill="#00e0e0" />
<text x="141.80" y="551.00" font-size="7.6" fill="#d0d0d0" text-anchor="start" textLength="12.40" lengthAdjust="spacingAndGlyphs" >cam</text>
<text x="219.80" y="551.00" font-size="7.6" fill="#d0d0d0" text-anchor="start" textLength="7.20" lengthAdjust="spacingAndGlyphs" >bg</text>
<rect x="264.80" y="544.60" width="49.80" height="10.20" fill="#1c1c1c" />
<rect x="264.20" y="543.80" width="49.80" height="10.20" fill="url(#gPur)" />
<text x="289.10" y="551.40" font-size="7.6" fill="#1a1a1a" text-anchor="middle" textLength="35.00" lengthAdjust="spacingAndGlyphs" >Reformat2</text>
<rect x="162.80" y="637.20" width="51.20" height="12.20" fill="#1c1c1c" />
<rect x="162.20" y="636.40" width="51.20" height="12.20" fill="url(#gPur)" />
<text x="187.80" y="645.50" font-size="7.6" fill="#1a1a1a" text-anchor="middle" textLength="37.00" lengthAdjust="spacingAndGlyphs" >Transform1</text>
<rect x="163.70" y="645.90" width="4.40" height="1.90" fill="#f00000" />
<rect x="168.35" y="645.90" width="4.40" height="1.90" fill="#00e000" />
<rect x="173.00" y="645.90" width="4.40" height="1.90" fill="#0000f0" />
<rect x="177.65" y="645.90" width="4.40" height="1.90" fill="#ffffff" />
<rect x="182.30" y="645.90" width="4.40" height="1.90" fill="#a000a0" />
<rect x="186.95" y="645.90" width="4.40" height="1.90" fill="#e000e0" />
<rect x="191.60" y="645.90" width="4.40" height="1.90" fill="#00e0e0" />
<circle cx="213.6" cy="636.2" r="2.6" fill="#c43838"/>
<text x="213.60" y="637.80" font-size="4" fill="#f0d0d0" text-anchor="middle" >A</text>
<rect x="163.00" y="729.80" width="51.00" height="12.00" fill="#1c1c1c" />
<rect x="162.40" y="729.00" width="51.00" height="12.00" fill="url(#gPur)" />
<text x="187.90" y="738.30" font-size="7.6" fill="#1a1a1a" text-anchor="middle" textLength="18.60" lengthAdjust="spacingAndGlyphs" >Crop1</text>
<rect x="163.90" y="738.30" width="4.40" height="1.90" fill="#f00000" />
<rect x="168.55" y="738.30" width="4.40" height="1.90" fill="#00e000" />
<rect x="173.20" y="738.30" width="4.40" height="1.90" fill="#0000f0" />
<rect x="177.85" y="738.30" width="4.40" height="1.90" fill="#ffffff" />
<rect x="182.50" y="738.30" width="4.40" height="1.90" fill="#a000a0" />
<rect x="187.15" y="738.30" width="4.40" height="1.90" fill="#e000e0" />
<rect x="191.80" y="738.30" width="4.40" height="1.90" fill="#00e0e0" />
<rect x="-14.00" y="758.30" width="51.00" height="11.80" fill="#1c1c1c" />
<rect x="-14.60" y="757.50" width="51.00" height="11.80" fill="url(#gGry)" />
<text x="10.90" y="766.20" font-size="7.6" fill="#1a1a1a" text-anchor="middle" textLength="48.60" lengthAdjust="spacingAndGlyphs" >ContactSheet1</text>
<rect x="-3.40" y="766.50" width="4.40" height="1.90" fill="#0000f0" />
<rect x="1.25" y="766.50" width="4.40" height="1.90" fill="#ffffff" />
<circle cx="36.8" cy="770.4" r="2.5" fill="#86e686" stroke="#5ab85a" stroke-width="0.5"/>
<text x="43.90" y="762.30" font-size="8.4" fill="#f0aa50" text-anchor="start" textLength="3.40" lengthAdjust="spacingAndGlyphs" >2</text>
<rect x="-14.00" y="796.30" width="51.00" height="11.80" fill="#1c1c1c" />
<rect x="-14.60" y="795.50" width="51.00" height="11.80" fill="url(#gPur)" />
<text x="10.90" y="804.40" font-size="7.6" fill="#1a1a1a" text-anchor="middle" textLength="22.60" lengthAdjust="spacingAndGlyphs" >Crop13</text>
<rect x="-3.40" y="804.50" width="4.40" height="1.90" fill="#0000f0" />
<rect x="1.25" y="804.50" width="4.40" height="1.90" fill="#ffffff" />
<circle cx="36.8" cy="807.9" r="2.5" fill="#86e686" stroke="#5ab85a" stroke-width="0.5"/>
<rect x="162.90" y="811.30" width="51.00" height="28.20" fill="#1c1c1c" />
<rect x="162.30" y="810.60" width="51.00" height="28.20" fill="url(#gYel)" />
<text x="186.40" y="819.00" font-size="7.6" fill="#1a1a1a" text-anchor="middle" textLength="20.60" lengthAdjust="spacingAndGlyphs" >Write1</text>
<text x="186.80" y="827.30" font-size="7.6" fill="#101010" text-anchor="middle" textLength="80.00" lengthAdjust="spacingAndGlyphs" >2D_transform_plate.mov</text>
<text x="187.10" y="835.00" font-size="7.6" fill="#1a1a1a" text-anchor="middle" textLength="26.80" lengthAdjust="spacingAndGlyphs" >(rec709)</text>
<rect x="164.00" y="836.00" width="4.40" height="1.50" fill="#f00000" />
<rect x="168.65" y="836.00" width="4.40" height="1.50" fill="#00e000" />
<rect x="173.30" y="836.00" width="4.40" height="1.50" fill="#0000f0" />
<rect x="461.10" y="583.40" width="51.80" height="12.40" fill="#1c1c1c" />
<rect x="460.50" y="582.60" width="51.80" height="12.40" fill="url(#gRed)" />
<text x="486.40" y="592.30" font-size="7.6" fill="#f4f4f4" text-anchor="middle" textLength="54.80" lengthAdjust="spacingAndGlyphs" >ScanlineRender5</text>
<rect x="462.00" y="592.30" width="4.40" height="1.90" fill="#f00000" />
<rect x="466.65" y="592.30" width="4.40" height="1.90" fill="#00e000" />
<rect x="471.30" y="592.30" width="4.40" height="1.90" fill="#0000f0" />
<rect x="475.95" y="592.30" width="4.40" height="1.90" fill="#ffffff" />
<rect x="480.60" y="592.30" width="4.40" height="1.90" fill="#a000a0" />
<rect x="485.25" y="592.30" width="4.40" height="1.90" fill="#e000e0" />
<rect x="489.90" y="592.30" width="4.40" height="1.90" fill="#00e0e0" />
<text x="483.00" y="568.70" font-size="7.6" fill="#c8c8c8" text-anchor="start" textLength="23.00" lengthAdjust="spacingAndGlyphs" >obj/scn</text>
<text x="488.40" y="577.00" font-size="7.6" fill="#c8c8c8" text-anchor="start" textLength="7.80" lengthAdjust="spacingAndGlyphs" >bg</text>
<text x="518.50" y="592.70" font-size="7.6" fill="#c8c8c8" text-anchor="start" textLength="13.00" lengthAdjust="spacingAndGlyphs" >cam</text>
<circle cx="578.8" cy="589" r="18.8" fill="#1a1a1a"/>
<circle cx="578.3" cy="588.4" r="18.7" fill="url(#gBlu)"/>
<text x="578.40" y="590.80" font-size="7.6" fill="#101850" text-anchor="middle" textLength="29.90" lengthAdjust="spacingAndGlyphs" >Camera6</text>
<text x="553.30" y="560.50" font-size="7.6" fill="#c8c8c8" text-anchor="start" textLength="14.00" lengthAdjust="spacingAndGlyphs" >look</text>
<text x="588.80" y="568.00" font-size="7.6" fill="#c8c8c8" text-anchor="start" textLength="13.00" lengthAdjust="spacingAndGlyphs" >axis</text>
<circle cx="597.4" cy="569.3" r="2.6" fill="#c43838"/>
<text x="597.40" y="570.90" font-size="4" fill="#f0d0d0" text-anchor="middle" >A</text>
<rect x="515.80" y="665.30" width="50.80" height="27.40" fill="#1c1c1c" />
<rect x="515.20" y="664.60" width="50.80" height="27.40" fill="url(#gYel)" />
<text x="540.30" y="672.80" font-size="7.6" fill="#1a1a1a" text-anchor="middle" textLength="21.50" lengthAdjust="spacingAndGlyphs" >Write2</text>
<text x="540.10" y="681.00" font-size="7.6" fill="#101010" text-anchor="middle" textLength="83.00" lengthAdjust="spacingAndGlyphs" >Exported_cam_plate.mov</text>
<text x="540.40" y="688.80" font-size="7.6" fill="#1a1a1a" text-anchor="middle" textLength="26.90" lengthAdjust="spacingAndGlyphs" >(rec709)</text>
<rect x="517.00" y="689.60" width="4.40" height="1.50" fill="#f00000" />
<rect x="521.65" y="689.60" width="4.40" height="1.50" fill="#00e000" />
<rect x="526.30" y="689.60" width="4.40" height="1.50" fill="#0000f0" />
<polygon points="631.20,571.70 842.20,571.70 842.20,609.70 628.20,609.70 628.20,574.70" fill="#cccc7c" />
<text x="632.20" y="602.70" font-size="30" fill="#000000" text-anchor="start" textLength="206.20" lengthAdjust="spacingAndGlyphs" >Exproted Cam</text>
<rect x="415.00" y="793.80" width="50.80" height="11.80" fill="#1c1c1c" />
<rect x="414.40" y="793.00" width="50.80" height="11.80" fill="url(#gGry)" />
<text x="439.80" y="801.70" font-size="7.6" fill="#1a1a1a" text-anchor="middle" textLength="47.80" lengthAdjust="spacingAndGlyphs" >ContactSheet2</text>
<rect x="415.90" y="802.10" width="4.40" height="1.90" fill="#f00000" />
<rect x="420.55" y="802.10" width="4.40" height="1.90" fill="#00e000" />
<rect x="425.20" y="802.10" width="4.40" height="1.90" fill="#0000f0" />
<rect x="429.85" y="802.10" width="4.40" height="1.90" fill="#ffffff" />
<circle cx="465.6" cy="805.5" r="2.5" fill="#86e686" stroke="#5ab85a" stroke-width="0.5"/>
<text x="403.30" y="794.00" font-size="7.6" fill="#e0e0e0" text-anchor="start" textLength="2.80" lengthAdjust="spacingAndGlyphs" >1</text>
<text x="443.00" y="786.60" font-size="7.6" fill="#e0e0e0" text-anchor="start" textLength="3.60" lengthAdjust="spacingAndGlyphs" >2</text>
<rect x="415.00" y="823.50" width="50.80" height="12.10" fill="#1c1c1c" />
<rect x="414.40" y="822.70" width="50.80" height="12.10" fill="url(#gPur)" />
<text x="439.80" y="832.50" font-size="7.6" fill="#1a1a1a" text-anchor="middle" textLength="19.50" lengthAdjust="spacingAndGlyphs" >Crop2</text>
<rect x="415.90" y="832.10" width="4.40" height="1.90" fill="#f00000" />
<rect x="420.55" y="832.10" width="4.40" height="1.90" fill="#00e000" />
<rect x="425.20" y="832.10" width="4.40" height="1.90" fill="#0000f0" />
<rect x="429.85" y="832.10" width="4.40" height="1.90" fill="#ffffff" />
<circle cx="465.6" cy="835.8" r="2.5" fill="#86e686" stroke="#5ab85a" stroke-width="0.5"/>
<text x="519.90" y="879.60" font-size="7.6" fill="#e0e0e0" text-anchor="start" textLength="2.80" lengthAdjust="spacingAndGlyphs" >1</text>
<path d="M516,882.3 H562.4 L564.8,884.6 V891.2 L562.4,893.5 H516 L513.6,891.2 V884.6 Z" fill="#f2b262" stroke="#3a2a10" stroke-width="0.7" stroke-dasharray="1.5,1"/>
<text x="538.40" y="891.10" font-size="7.6" fill="#1a1a1a" text-anchor="middle" textLength="25.40" lengthAdjust="spacingAndGlyphs" >Viewer1</text>
<circle cx="512.2" cy="888" r="1.2" fill="#0a0a0a"/>
<text x="0.00" y="641.00" font-size="7.6" fill="#d29a50" text-anchor="start" textLength="14.00" lengthAdjust="spacingAndGlyphs" clip-path="url(#ngclip)">Plate</text>
<text x="-5.50" y="641.00" font-size="7.6" fill="#d29a50" text-anchor="start" >P</text>
<line x1="866.00" y1="844.30" x2="1021.00" y2="844.30" stroke="#d8d8d8" stroke-width="1" />
<line x1="866.40" y1="844.00" x2="866.40" y2="897.00" stroke="#d8d8d8" stroke-width="1" />
<rect x="866.4" y="844.3" width="3.4" height="3.4" fill="none" stroke="#d8d8d8" stroke-width="0.8"/>
<rect x="963.3" y="881.4" width="44.8" height="15" rx="1.5" fill="#5a4c4c" stroke="#c8a0a0" stroke-width="1"/>
<path d="M973.4,854.6 L964.6,861.4 L973.4,868.6 L982.4,861.4 Z M973.4,854.6 L969,861.4 L973.4,868.6 L977.8,861.4 Z M973.4,854.6 V880" fill="none" stroke="#c89040" stroke-width="0.7"/>
<line x1="964.60" y1="861.40" x2="982.40" y2="861.40" stroke="#e0e0e0" stroke-width="0.8" stroke-dasharray="2,1.4"/>
<path d="M973.4,868.6 L986,879 M962,868.4 H973.4 M962,880 H973" fill="none" stroke="#c89040" stroke-width="0.6"/>
<rect x="957.60" y="876.20" width="8.40" height="1.60" fill="#cccc7c" />
<circle cx="886.4" cy="852" r="0.8" fill="#d00000"/>
<circle cx="899.8" cy="851.4" r="0.8" fill="#d00000"/>
<circle cx="893.4" cy="859.4" r="0.8" fill="#d00000"/>
<circle cx="913.6" cy="851.4" r="0.8" fill="#d00000"/>
<circle cx="918.4" cy="851.4" r="0.8" fill="#d00000"/>
<circle cx="922" cy="851.4" r="0.8" fill="#d00000"/>
<circle cx="926.4" cy="851.4" r="0.8" fill="#d00000"/>
<circle cx="930.6" cy="851.4" r="0.8" fill="#d00000"/>
<circle cx="914" cy="855.4" r="0.8" fill="#d00000"/>
<circle cx="913.6" cy="859.4" r="0.8" fill="#d00000"/>
<circle cx="935" cy="851.6" r="0.8" fill="#d00000"/>
<circle cx="935" cy="859.6" r="0.8" fill="#d00000"/>
<circle cx="937.6" cy="856.6" r="0.8" fill="#d00000"/>
<circle cx="962" cy="868.4" r="0.8" fill="#d00000"/>
<circle cx="973.4" cy="868.4" r="0.8" fill="#d00000"/>
<circle cx="962" cy="880" r="0.8" fill="#d00000"/>
<circle cx="974" cy="880.2" r="0.8" fill="#d00000"/>
<rect x="891.80" y="848.90" width="2.40" height="1.00" fill="#d8d8d8" />
<rect x="891.80" y="852.70" width="2.40" height="1.00" fill="#d8d8d8" />
<rect x="897.80" y="849.90" width="2.40" height="1.00" fill="#d8d8d8" />
<rect x="892.20" y="864.90" width="2.40" height="1.00" fill="#d8d8d8" />
<rect x="961.20" y="864.50" width="2.40" height="1.00" fill="#d8d8d8" />
<rect x="972.20" y="853.90" width="2.40" height="1.00" fill="#d8d8d8" />
<path d="M886.4,852 L914,855.4 L930.6,851.4 M893.4,859.4 L913.6,859.4 M893.4,865.4 H913" fill="none" stroke="#141414" stroke-width="0.6"/>
<line x1="908.60" y1="844.60" x2="908.60" y2="851.00" stroke="#1a1a1a" stroke-width="0.5" />
<line x1="913.60" y1="844.60" x2="913.60" y2="851.00" stroke="#1a1a1a" stroke-width="0.5" />
<line x1="918.40" y1="844.60" x2="918.40" y2="851.00" stroke="#1a1a1a" stroke-width="0.5" />
<line x1="922.00" y1="844.60" x2="922.00" y2="851.00" stroke="#1a1a1a" stroke-width="0.5" />
<line x1="926.40" y1="844.60" x2="926.40" y2="851.00" stroke="#1a1a1a" stroke-width="0.5" />
<line x1="930.60" y1="844.60" x2="930.60" y2="851.00" stroke="#1a1a1a" stroke-width="0.5" />
<rect x="912.60" y="862.00" width="2.00" height="3.60" fill="#102080" />
<rect x="918.00" y="860.80" width="3.40" height="1.00" fill="#102080" />
<rect x="936.60" y="862.40" width="2.00" height="3.40" fill="#102080" />
<rect x="898.60" y="859.00" width="2.40" height="1.20" fill="#a070a0" />
<path d="M968,888.6 L974,889 L988,893.6 L991.4,897 M988,893.6 L989.6,881.4" fill="none" stroke="#d09a40" stroke-width="0.7" stroke-dasharray="1.5,0.8"/>
<rect x="972.60" y="891.40" width="2.40" height="1.00" fill="#d0b030" />
<rect x="964.60" y="890.40" width="2.00" height="1.00" fill="#a070a0" />
<rect x="972.60" y="884.40" width="2.40" height="1.00" fill="#a070a0" />
<rect x="986.40" y="890.60" width="2.40" height="1.20" fill="#a090b0" />
<rect x="990.00" y="884.20" width="2.00" height="1.00" fill="#d0b030" />
<rect x="994.60" y="881.00" width="8.00" height="1.00" fill="#d0a040" />
<rect x="992.40" y="880.80" width="1.60" height="1.20" fill="#3030d0" />
</g>
</svg>
</body></html>
